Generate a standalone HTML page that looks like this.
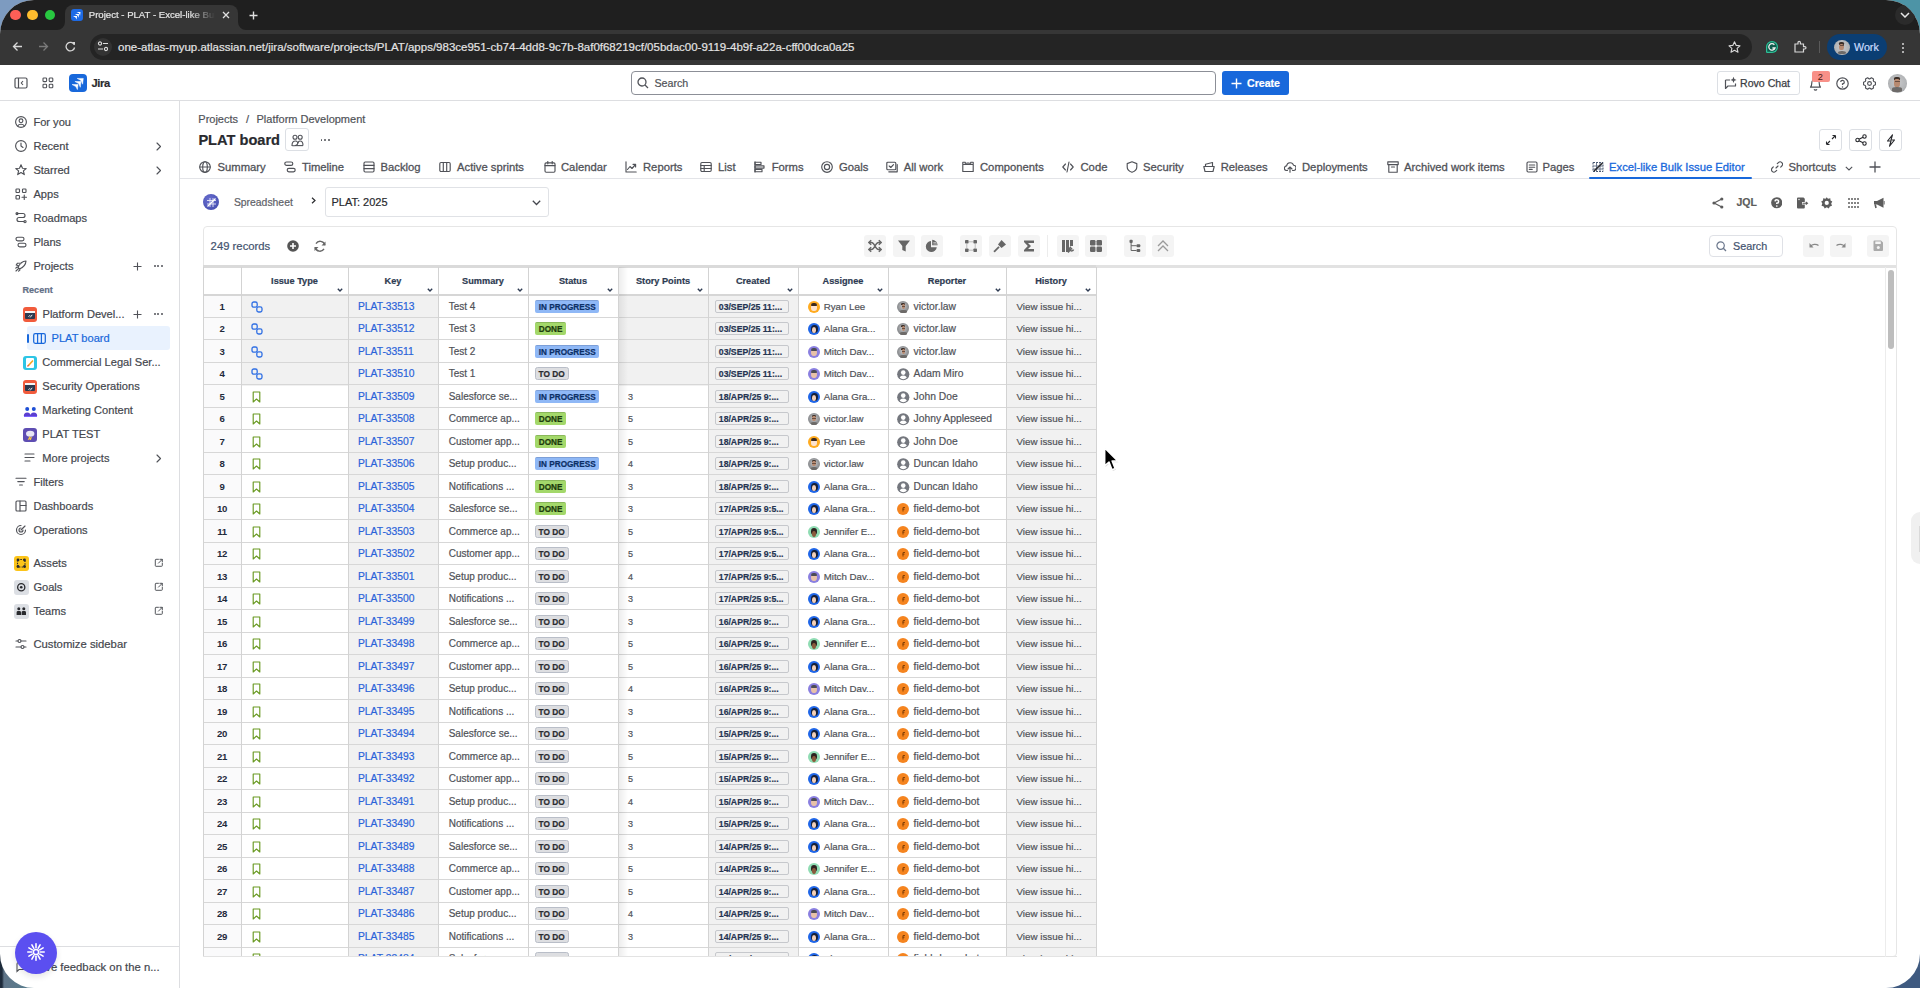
<!DOCTYPE html>
<html><head><meta charset="utf-8"><title>Project - PLAT - Excel-like Bulk Issue Editor</title><style>
*{box-sizing:border-box;margin:0;padding:0}
html,body{width:1920px;height:988px;overflow:hidden;font-family:"Liberation Sans", sans-serif}
body{background:linear-gradient(135deg,#7f9cc4 0%,#4f8aa0 45%,#3d5d86 100%);position:relative}
.win{position:absolute;left:0;top:0;width:1920px;height:988px;border-radius:34px;overflow:hidden;background:#fff}
.t{position:absolute;white-space:nowrap;-webkit-text-stroke-width:0.2px}
.r{position:absolute}
</style></head><body>
<div class="r" style="left:0.00px;top:0.00px;width:60.00px;height:60.00px;background:#7d9bc0"></div>
<div class="r" style="left:1860.00px;top:0.00px;width:60.00px;height:60.00px;background:#4d94a6"></div>
<div class="r" style="left:0.00px;top:928.00px;width:60.00px;height:60.00px;background:linear-gradient(90deg,#1d2a3a 0,#1d2a3a 2px,#5f7488 4px,#557f8e 60%,#3f7f8a)"></div>
<div class="r" style="left:1860.00px;top:928.00px;width:60.00px;height:60.00px;background:#3f5a80"></div>
<div class="win">
<div class="r" style="left:0.00px;top:0.00px;width:1920.00px;height:30.00px;background:#1f1f1f"></div>
<div class="r" style="left:0.00px;top:30.00px;width:1920.00px;height:35.00px;background:#363636"></div>
<div class="r" style="left:10.30px;top:9.90px;width:10.60px;height:10.60px;background:#fe5f57;border-radius:50%"></div>
<div class="r" style="left:27.00px;top:9.90px;width:10.60px;height:10.60px;background:#febc2e;border-radius:50%"></div>
<div class="r" style="left:44.70px;top:9.90px;width:10.60px;height:10.60px;background:#28c840;border-radius:50%"></div>
<div class="r" style="left:65.00px;top:5.00px;width:173.00px;height:26.00px;background:#363636;border-radius:8px 8px 0 0"></div>
<svg class="r" style="left:57.00px;top:22.00px;" width="8" height="8" viewBox="0 0 8 8"><path d="M8 0 V8 H0 A8 8 0 0 0 8 0Z" fill="#363636"/></svg>
<svg class="r" style="left:238.00px;top:22.00px;" width="8" height="8" viewBox="0 0 8 8"><path d="M0 0 V8 H8 A8 8 0 0 1 0 0Z" fill="#363636"/></svg>
<div class="r" style="left:71.00px;top:9.00px;width:12.00px;height:12.00px;background:#1d6ae5;border-radius:3px"></div>
<svg class="r" style="left:71.00px;top:9.00px;" width="12" height="12" viewBox="0 0 12 12"><g transform="scale(0.6667)"><path d="M8.2 4.4 H14.3 L13.6 10.2 L12 6.5Z M5.9 7.5 H12 L11.3 13.3 L9.7 9.6Z M3 10.5 H9.1 L8.4 15.6 L6.8 12.6Z" fill="#fff"/></g></svg>
<div class="t" style="left:88.75px;top:10px;font-size:9.6px;line-height:9.6px;font-weight:400;color:#e6e6e6;width:126px;overflow:hidden;-webkit-mask-image:linear-gradient(90deg,#000 80%,transparent 100%)">Project - PLAT - Excel-like Bulk Issue Editor</div>
<svg class="r" style="left:222.00px;top:11.00px;" width="8" height="8" viewBox="0 0 8 8"><path d="M1 1 L7 7 M7 1 L1 7" stroke="#e0e0e0" stroke-width="1.3"/></svg>
<svg class="r" style="left:249.00px;top:11.00px;" width="9" height="9" viewBox="0 0 9 9"><path d="M4.5 0.5 V8.5 M0.5 4.5 H8.5" stroke="#e0e0e0" stroke-width="1.4"/></svg>
<div class="r" style="left:1895.00px;top:5.00px;width:20.00px;height:20.00px;background:#2b2b2b;border-radius:50%"></div>
<svg class="r" style="left:1900.00px;top:12.00px;" width="10" height="6" viewBox="0 0 10 6"><path d="M1 1 L5 5 L9 1" stroke="#e8e8e8" stroke-width="1.5" fill="none"/></svg>
<svg class="r" style="left:12.00px;top:41.00px;" width="11" height="11" viewBox="0 0 11 11"><path d="M10 5.5 H1.5 M5.5 1.5 L1.5 5.5 L5.5 9.5" stroke="#d8d8d8" stroke-width="1.3" fill="none"/></svg>
<svg class="r" style="left:38.00px;top:41.00px;" width="11" height="11" viewBox="0 0 11 11"><path d="M1 5.5 H9.5 M5.5 1.5 L9.5 5.5 L5.5 9.5" stroke="#7a7a7a" stroke-width="1.3" fill="none"/></svg>
<svg class="r" style="left:65.00px;top:41.00px;" width="11" height="11" viewBox="0 0 11 11"><path d="M9.3 3.8 A4.3 4.3 0 1 0 9.6 6.5" stroke="#d8d8d8" stroke-width="1.3" fill="none"/><path d="M6.8 1 H10 V4.2Z" fill="#d8d8d8"/></svg>
<div class="r" style="left:90.00px;top:34.00px;width:1662.00px;height:25.50px;background:#242424;border-radius:13px"></div>
<div class="r" style="left:94.00px;top:37.50px;width:18.00px;height:18.00px;background:#333;border-radius:50%"></div>
<svg class="r" style="left:97.00px;top:41.00px;" width="12" height="11" viewBox="0 0 12 11"><circle cx="3" cy="2.5" r="1.6" stroke="#ddd" stroke-width="1.1" fill="none"/><path d="M6 2.5 H11" stroke="#ddd" stroke-width="1.2"/><circle cx="9" cy="8" r="1.6" stroke="#ddd" stroke-width="1.1" fill="none"/><path d="M1 8 H6" stroke="#ddd" stroke-width="1.2"/></svg>
<div class="t" style="left:118.00px;top:42px;font-size:11.5px;line-height:11.5px;font-weight:400;color:#e3e3e3;">one-atlas-myup.atlassian.net/jira/software/projects/PLAT/apps/983ce951-cb74-4dd8-9c7b-8af0f68219cf/05bdac00-9119-4b9f-a22a-cff00dca0a25</div>
<svg class="r" style="left:1728.00px;top:41.00px;" width="13" height="12" viewBox="0 0 13 12"><path d="M6.5 0.8 L8.2 4.4 L12 4.8 L9.1 7.3 L10 11.2 L6.5 9.2 L3 11.2 L3.9 7.3 L1 4.8 L4.8 4.4Z" stroke="#d8d8d8" stroke-width="1.1" fill="none" stroke-linejoin="round"/></svg>
<div class="r" style="left:1766.00px;top:41.00px;width:12.00px;height:12.00px;background:#0f5a4b;border-radius:50% 50% 50% 10%;box-shadow:inset 0 0 0 1.2px #2fbf97"></div>
<svg class="r" style="left:1766.00px;top:41.00px;" width="12" height="12" viewBox="0 0 12 12"><path d="M8.4 3.8 A3.2 3.2 0 1 0 9 7 H6.4" stroke="#f2f2f2" stroke-width="1.3" fill="none"/></svg>
<svg class="r" style="left:1793.00px;top:40.00px;" width="14" height="14" viewBox="0 0 14 14"><path d="M2 4 H5 V2.5 A1.2 1.2 0 0 1 7.4 2.5 V4 H10.5 V6.6 H11.8 A1.2 1.2 0 0 1 11.8 9 H10.5 V12 H2Z" stroke="#d8d8d8" stroke-width="1.2" fill="none"/></svg>
<div class="r" style="left:1819.00px;top:41.00px;width:1.00px;height:12.00px;background:#5a5a5a"></div>
<div class="r" style="left:1827.00px;top:34.00px;width:60.00px;height:26.00px;background:#0b3e73;border-radius:13px"></div>
<div class="r" style="left:1834.00px;top:39.50px;width:15.50px;height:15.50px;background:radial-gradient(circle at 50% 45%,#c9cacc 0,#b3b5b7 60%,#8e9194 100%);border-radius:50%;overflow:hidden"></div>
<div class="r" style="left:1839.12px;top:41.67px;width:5.27px;height:3.10px;background:#3b2e27;border-radius:40% 40% 10% 10%"></div>
<div class="r" style="left:1839.42px;top:43.69px;width:4.65px;height:6.51px;background:#b88a70;border-radius:40%"></div>
<div class="r" style="left:1839.58px;top:45.39px;width:4.34px;height:0.93px;background:rgba(40,30,25,0.55)"></div>
<div class="r" style="left:1837.72px;top:50.66px;width:8.06px;height:3.72px;background:#6d6a68;border-radius:45% 45% 30% 30%"></div>
<div class="t" style="left:1854.00px;top:42px;font-size:10.7px;line-height:10.7px;font-weight:400;color:#c9dcff;">Work</div>
<div class="r" style="left:1902.00px;top:42.80px;width:2.10px;height:2.10px;background:#d8d8d8;border-radius:50%"></div>
<div class="r" style="left:1902.00px;top:47.00px;width:2.10px;height:2.10px;background:#d8d8d8;border-radius:50%"></div>
<div class="r" style="left:1902.00px;top:51.20px;width:2.10px;height:2.10px;background:#d8d8d8;border-radius:50%"></div>
<div class="r" style="left:0.00px;top:65.00px;width:1920.00px;height:35.50px;background:#fff"></div>
<div class="r" style="left:0.00px;top:100.00px;width:1920.00px;height:1.00px;background:#dddee1"></div>
<svg class="r" style="left:14.00px;top:77.00px;" width="14" height="12" viewBox="0 0 14 12"><rect x="1" y="1" width="12" height="10" rx="1.5" stroke="#505258" stroke-width="1.2" fill="none"/><path d="M4.5 1 V11" stroke="#505258" stroke-width="1.2"/><path d="M9 4 L7.3 6 L9 8" stroke="#505258" stroke-width="1.1" fill="none"/></svg>
<svg class="r" style="left:42.00px;top:77.00px;" width="12" height="12" viewBox="0 0 12 12"><rect x="1" y="1" width="3.6" height="3.6" rx="0.8" stroke="#505258" stroke-width="1.1" fill="none"/><rect x="1" y="7.2" width="3.6" height="3.6" rx="0.8" stroke="#505258" stroke-width="1.1" fill="none"/><rect x="7.2" y="1" width="3.6" height="3.6" rx="0.8" stroke="#505258" stroke-width="1.1" fill="none"/><rect x="7.2" y="7.2" width="3.6" height="3.6" rx="0.8" stroke="#505258" stroke-width="1.1" fill="none"/></svg>
<div class="r" style="left:69.00px;top:74.00px;width:18.00px;height:18.00px;background:#1868db;border-radius:4px"></div>
<svg class="r" style="left:69.00px;top:74.00px;" width="18" height="18" viewBox="0 0 18 18"><path d="M8.2 4.4 H14.3 L13.600000000000001 10.2 L12.0 6.5 Z M5.9 7.5 H12.0 L11.3 13.3 L9.7 9.6 Z M3.0 10.5 H9.1 L8.4 15.6 L6.8 12.6 Z" fill="#fff" stroke="#fff" stroke-width="0.5" stroke-linejoin="round"/></svg>
<div class="t" style="left:91.50px;top:78px;font-size:11.2px;line-height:11.2px;font-weight:700;color:#292a2e;letter-spacing:-0.4px">Jira</div>
<div class="r" style="left:631.00px;top:71.00px;width:584.50px;height:24.00px;border:1px solid #8c8f97;border-radius:4px;background:#fff"></div>
<svg class="r" style="left:637.00px;top:77.00px;" width="12" height="12" viewBox="0 0 12 12"><circle cx="5" cy="5" r="4" stroke="#505258" stroke-width="1.3" fill="none"/><path d="M8 8 L11 11" stroke="#505258" stroke-width="1.3"/></svg>
<div class="t" style="left:654.40px;top:78px;font-size:10.7px;line-height:10.7px;font-weight:400;color:#505258;">Search</div>
<div class="r" style="left:1222.00px;top:71.20px;width:67.00px;height:23.40px;background:#1868db;border-radius:3px"></div>
<svg class="r" style="left:1231.00px;top:77.50px;" width="11" height="11" viewBox="0 0 11 11"><path d="M5.5 0.5 V10.5 M0.5 5.5 H10.5" stroke="#fff" stroke-width="1.4"/></svg>
<div class="t" style="left:1247.00px;top:78px;font-size:10.6px;line-height:10.6px;font-weight:700;color:#fff;">Create</div>
<div class="r" style="left:1716.60px;top:71.40px;width:83.00px;height:23.20px;border:1px solid #dcdfe4;border-radius:3px"></div>
<svg class="r" style="left:1724.00px;top:76.00px;" width="14" height="14" viewBox="0 0 14 14"><path d="M1.5 4 H6 M1.5 4 V12.5 L4 10 H11.5 V7.5" stroke="#505258" stroke-width="1.2" fill="none" stroke-linejoin="round"/><path d="M9.5 0.8 L10.4 3 L12.6 3.9 L10.4 4.8 L9.5 7 L8.6 4.8 L6.4 3.9 L8.6 3Z" fill="#505258"/></svg>
<div class="t" style="left:1740.00px;top:78px;font-size:10.6px;line-height:10.6px;font-weight:400;color:#3b3d42;-webkit-text-stroke:0.25px #3b3d42">Rovo Chat</div>
<svg class="r" style="left:1809.00px;top:76.00px;" width="13" height="15" viewBox="0 0 13 15"><path d="M1.5 11.2 C2.6 10.2 2.8 9 2.8 6.8 A3.7 3.9 0 0 1 10.2 6.8 C10.2 9 10.4 10.2 11.5 11.2 Z" stroke="#505258" stroke-width="1.2" fill="none" stroke-linejoin="round"/><path d="M5.1 13.3 A1.5 1.3 0 0 0 7.9 13.3" stroke="#505258" stroke-width="1.2" fill="none"/></svg>
<div class="r" style="left:1812.30px;top:70.50px;width:17.70px;height:11.50px;background:#f89088;border-radius:2px"></div>
<div class="t" style="left:1817.80px;top:73px;font-size:9.2px;line-height:9.2px;font-weight:400;color:#4a1a14;-webkit-text-stroke-width:0">2</div>
<svg class="r" style="left:1835.50px;top:76.50px;" width="13" height="13" viewBox="0 0 13 13"><circle cx="6.5" cy="6.5" r="5.7" stroke="#505258" stroke-width="1.2" fill="none"/><path d="M4.7 5 A1.8 1.8 0 1 1 6.5 6.9 V8" stroke="#505258" stroke-width="1.2" fill="none"/><circle cx="6.5" cy="9.9" r="0.75" fill="#505258"/></svg>
<svg class="r" style="left:1862.50px;top:76.50px;" width="13" height="13" viewBox="0 0 13 13"><polygon points="10.79,4.58 12.48,5.29 12.48,7.71 10.79,8.42 10.31,9.26 10.54,11.07 8.44,12.28 6.99,11.17 6.01,11.17 4.56,12.28 2.46,11.07 2.69,9.26 2.21,8.42 0.52,7.71 0.52,5.29 2.21,4.58 2.69,3.74 2.46,1.93 4.56,0.72 6.01,1.83 6.99,1.83 8.44,0.72 10.54,1.93 10.31,3.74" stroke="#505258" stroke-width="1.15" fill="none" stroke-linejoin="round"/><circle cx="6.5" cy="6.5" r="1.9" stroke="#505258" stroke-width="1.15" fill="none"/></svg>
<div class="r" style="left:1888.00px;top:74.00px;width:18.50px;height:18.50px;background:radial-gradient(circle at 50% 45%,#c9cacc 0,#b3b5b7 60%,#8e9194 100%);border-radius:50%;overflow:hidden"></div>
<div class="r" style="left:1894.11px;top:76.59px;width:6.29px;height:3.70px;background:#3b2e27;border-radius:40% 40% 10% 10%"></div>
<div class="r" style="left:1894.47px;top:79.00px;width:5.55px;height:7.77px;background:#b88a70;border-radius:40%"></div>
<div class="r" style="left:1894.66px;top:81.03px;width:5.18px;height:1.11px;background:rgba(40,30,25,0.55)"></div>
<div class="r" style="left:1892.44px;top:87.32px;width:9.62px;height:4.44px;background:#6d6a68;border-radius:45% 45% 30% 30%"></div>
<div class="r" style="left:179.00px;top:101.00px;width:1.00px;height:887.00px;background:#dddee1"></div>
<svg class="r" style="left:15.00px;top:115.80px;" width="12" height="12" viewBox="0 0 12 12"><circle cx="6" cy="6" r="5.4" stroke="#505258" stroke-width="1.15" fill="none" stroke-linecap="round" stroke-linejoin="round"/><circle cx="6" cy="4.8" r="1.9" stroke="#505258" stroke-width="1.15" fill="none" stroke-linecap="round" stroke-linejoin="round"/><path d="M2.6 10 A3.8 3.2 0 0 1 9.4 10" stroke="#505258" stroke-width="1.15" fill="none" stroke-linecap="round" stroke-linejoin="round"/></svg>
<div class="t" style="left:33.40px;top:117px;font-size:11.1px;line-height:11.1px;font-weight:400;color:#44474e;">For you</div>
<svg class="r" style="left:15.00px;top:139.80px;" width="12" height="12" viewBox="0 0 12 12"><circle cx="6" cy="6" r="5.4" stroke="#505258" stroke-width="1.15" fill="none" stroke-linecap="round" stroke-linejoin="round"/><path d="M6 3 V6 L8 7.5" stroke="#505258" stroke-width="1.15" fill="none" stroke-linecap="round" stroke-linejoin="round"/></svg>
<div class="t" style="left:33.40px;top:141px;font-size:11.1px;line-height:11.1px;font-weight:400;color:#44474e;">Recent</div>
<svg class="r" style="left:15.00px;top:163.80px;" width="12" height="12" viewBox="0 0 12 12"><path d="M6 0.8 L7.5 4.2 L11.2 4.5 L8.4 6.9 L9.3 10.6 L6 8.6 L2.7 10.6 L3.6 6.9 L0.8 4.5 L4.5 4.2Z" stroke="#505258" stroke-width="1.15" fill="none" stroke-linecap="round" stroke-linejoin="round"/></svg>
<div class="t" style="left:33.40px;top:165px;font-size:11.1px;line-height:11.1px;font-weight:400;color:#44474e;">Starred</div>
<svg class="r" style="left:15.00px;top:187.80px;" width="12" height="12" viewBox="0 0 12 12"><rect x="1" y="1" width="3.5" height="3.5" rx="0.7" stroke="#505258" stroke-width="1.15" fill="none" stroke-linecap="round" stroke-linejoin="round"/><rect x="7.5" y="1" width="3.5" height="3.5" rx="0.7" stroke="#505258" stroke-width="1.15" fill="none" stroke-linecap="round" stroke-linejoin="round"/><rect x="1" y="7.5" width="3.5" height="3.5" rx="0.7" stroke="#505258" stroke-width="1.15" fill="none" stroke-linecap="round" stroke-linejoin="round"/><path d="M9.25 7 V11.5 M7 9.25 H11.5" stroke="#505258" stroke-width="1.15" fill="none" stroke-linecap="round" stroke-linejoin="round"/></svg>
<div class="t" style="left:33.40px;top:189px;font-size:11.1px;line-height:11.1px;font-weight:400;color:#44474e;">Apps</div>
<svg class="r" style="left:15.00px;top:211.80px;" width="12" height="12" viewBox="0 0 12 12"><path d="M2 1.5 H8 A2 2 0 0 1 8 5.5 H4 A2 2 0 0 0 4 9.5 H9" stroke="#505258" stroke-width="1.15" fill="none" stroke-linecap="round" stroke-linejoin="round"/><circle cx="2" cy="1.6" r="1" stroke="#505258" stroke-width="1.15" fill="none" stroke-linecap="round" stroke-linejoin="round"/><circle cx="10" cy="9.6" r="1.1" stroke="#505258" stroke-width="1.15" fill="none" stroke-linecap="round" stroke-linejoin="round"/></svg>
<div class="t" style="left:33.40px;top:213px;font-size:11.1px;line-height:11.1px;font-weight:400;color:#44474e;">Roadmaps</div>
<svg class="r" style="left:15.00px;top:235.80px;" width="12" height="12" viewBox="0 0 12 12"><rect x="1" y="1.2" width="8" height="3.6" rx="1.8" stroke="#505258" stroke-width="1.15" fill="none" stroke-linecap="round" stroke-linejoin="round"/><rect x="3" y="7.2" width="8" height="3.6" rx="1.8" stroke="#505258" stroke-width="1.15" fill="none" stroke-linecap="round" stroke-linejoin="round"/></svg>
<div class="t" style="left:33.40px;top:237px;font-size:11.1px;line-height:11.1px;font-weight:400;color:#44474e;">Plans</div>
<svg class="r" style="left:15.00px;top:259.80px;" width="12" height="12" viewBox="0 0 12 12"><path d="M3.2 8.8 L1 11 M5 9.8 L3.6 11.2 M2.2 6.8 L0.8 8.2 M3 7.5 C4.5 4 7 1.2 11 1 C10.8 5 8 7.5 4.5 9 Z M6.5 3 L2.5 3.2 L1.2 5 L3.6 5.8" stroke="#505258" stroke-width="1.15" fill="none" stroke-linecap="round" stroke-linejoin="round"/></svg>
<div class="t" style="left:33.40px;top:261px;font-size:11.1px;line-height:11.1px;font-weight:400;color:#44474e;">Projects</div>
<svg class="r" style="left:154.50px;top:141.50px;" width="7" height="9" viewBox="0 0 7 9"><path d="M2 1 L5.5 4.5 L2 8" stroke="#505258" stroke-width="1.15" fill="none" stroke-linecap="round" stroke-linejoin="round"/></svg>
<svg class="r" style="left:154.50px;top:165.50px;" width="7" height="9" viewBox="0 0 7 9"><path d="M2 1 L5.5 4.5 L2 8" stroke="#505258" stroke-width="1.15" fill="none" stroke-linecap="round" stroke-linejoin="round"/></svg>
<svg class="r" style="left:132.50px;top:261.50px;" width="9" height="9" viewBox="0 0 9 9"><path d="M4.5 0.5 V8.5 M0.5 4.5 H8.5" stroke="#505258" stroke-width="1.1"/></svg>
<div class="r" style="left:153.50px;top:265.00px;width:2.00px;height:2.00px;background:#505258;border-radius:50%"></div>
<div class="r" style="left:157.30px;top:265.00px;width:2.00px;height:2.00px;background:#505258;border-radius:50%"></div>
<div class="r" style="left:161.10px;top:265.00px;width:2.00px;height:2.00px;background:#505258;border-radius:50%"></div>
<div class="t" style="left:22.50px;top:286px;font-size:9.1px;line-height:9.1px;font-weight:700;color:#626f86;">Recent</div>
<div class="r" style="left:22.50px;top:307.00px;width:14.50px;height:14.50px;background:#f15b3c;border-radius:3px"></div>
<div class="r" style="left:24.50px;top:310.50px;width:10.50px;height:8.00px;background:#2d3a4f;border-radius:1px"></div>
<div class="r" style="left:24.50px;top:310.50px;width:10.50px;height:2.20px;background:#f5f5f5"></div>
<svg class="r" style="left:27.50px;top:314.00px;" width="5" height="4" viewBox="0 0 5 4"><path d="M0.5 2.8 L2 1.2 M2.2 3.4 L4.2 0.8" stroke="#fff" stroke-width="0.9"/></svg>
<div class="t" style="left:42.50px;top:309px;font-size:11.1px;line-height:11.1px;font-weight:400;color:#44474e;">Platform Devel...</div>
<svg class="r" style="left:132.50px;top:309.50px;" width="9" height="9" viewBox="0 0 9 9"><path d="M4.5 0.5 V8.5 M0.5 4.5 H8.5" stroke="#505258" stroke-width="1.1"/></svg>
<div class="r" style="left:153.50px;top:313.00px;width:2.00px;height:2.00px;background:#505258;border-radius:50%"></div>
<div class="r" style="left:157.30px;top:313.00px;width:2.00px;height:2.00px;background:#505258;border-radius:50%"></div>
<div class="r" style="left:161.10px;top:313.00px;width:2.00px;height:2.00px;background:#505258;border-radius:50%"></div>
<div class="r" style="left:27.00px;top:326.30px;width:143.00px;height:23.40px;background:#e9f2fe;border-radius:3px"></div>
<div class="r" style="left:27.20px;top:334.00px;width:1.60px;height:8.50px;background:#1868db;border-radius:1px"></div>
<svg class="r" style="left:32.50px;top:332.50px;" width="13" height="11" viewBox="0 0 13 11"><rect x="0.7" y="0.7" width="11.6" height="9.6" rx="1.5" stroke="#1868db" stroke-width="1.25" fill="none"/><path d="M4.6 0.7 V10.3 M8.4 0.7 V10.3" stroke="#1868db" stroke-width="1.25"/></svg>
<div class="t" style="left:51.50px;top:333px;font-size:11.1px;line-height:11.1px;font-weight:400;color:#1868db;">PLAT board</div>
<div class="r" style="left:22.50px;top:355.50px;width:14.50px;height:14.50px;background:#2ec5e5;border-radius:3px"></div>
<div class="r" style="left:25.50px;top:358.00px;width:8.50px;height:9.50px;background:#fff;border-radius:1px"></div>
<svg class="r" style="left:26.50px;top:358.50px;" width="7" height="8" viewBox="0 0 7 8"><path d="M1 7 L6 1.5" stroke="#f5a623" stroke-width="1.6"/><path d="M0.5 7.5 L1.5 6" stroke="#d9534f" stroke-width="1.2"/></svg>
<div class="t" style="left:42.30px;top:357px;font-size:11.1px;line-height:11.1px;font-weight:400;color:#44474e;">Commercial Legal Ser...</div>
<div class="r" style="left:22.50px;top:379.50px;width:14.50px;height:14.50px;background:#f15b3c;border-radius:3px"></div>
<div class="r" style="left:24.50px;top:383.00px;width:10.50px;height:8.00px;background:#2d3a4f;border-radius:1px"></div>
<div class="r" style="left:24.50px;top:383.00px;width:10.50px;height:2.20px;background:#f5f5f5"></div>
<svg class="r" style="left:27.50px;top:386.50px;" width="5" height="4" viewBox="0 0 5 4"><path d="M0.5 2.8 L2 1.2 M2.2 3.4 L4.2 0.8" stroke="#fff" stroke-width="0.9"/></svg>
<div class="t" style="left:42.30px;top:381px;font-size:11.1px;line-height:11.1px;font-weight:400;color:#44474e;">Security Operations</div>
<svg class="r" style="left:22.50px;top:403.50px;" width="15" height="15" viewBox="0 0 15 15"><circle cx="4.2" cy="5" r="2" fill="#1d4fd6"/><circle cx="10.8" cy="5" r="2" fill="#1d4fd6"/><path d="M0.8 12 A3.4 3.6 0 0 1 7.6 12Z M7.4 12 A3.4 3.6 0 0 1 14.2 12Z" fill="#5b3fd1"/><path d="M1 12.5 H14" stroke="#7b61ff" stroke-width="1"/></svg>
<div class="t" style="left:42.30px;top:405px;font-size:11.1px;line-height:11.1px;font-weight:400;color:#44474e;">Marketing Content</div>
<div class="r" style="left:22.50px;top:427.50px;width:14.50px;height:14.50px;background:#5e4db2;border-radius:3px"></div>
<svg class="r" style="left:24.50px;top:430.00px;" width="10.5" height="9.5" viewBox="0 0 10.5 9.5"><ellipse cx="5.2" cy="3.8" rx="4.2" ry="3" fill="#e8e6f5"/><path d="M5 6.5 L3.8 9 L6 8 L5.2 10" stroke="#f5c542" stroke-width="1.2" fill="none"/></svg>
<div class="t" style="left:42.30px;top:429px;font-size:11.1px;line-height:11.1px;font-weight:400;color:#44474e;">PLAT TEST</div>
<svg class="r" style="left:24.00px;top:452.00px;" width="12" height="12" viewBox="0 0 12 12"><path d="M1 2 H10 M1 5.5 H10 M1 9 H6" stroke="#505258" stroke-width="1.15" fill="none" stroke-linecap="round" stroke-linejoin="round"/></svg>
<div class="t" style="left:42.30px;top:453px;font-size:11.1px;line-height:11.1px;font-weight:400;color:#44474e;">More projects</div>
<svg class="r" style="left:154.50px;top:453.50px;" width="7" height="9" viewBox="0 0 7 9"><path d="M2 1 L5.5 4.5 L2 8" stroke="#505258" stroke-width="1.15" fill="none" stroke-linecap="round" stroke-linejoin="round"/></svg>
<svg class="r" style="left:15.00px;top:476.00px;" width="12" height="12" viewBox="0 0 12 12"><path d="M1 2.2 H11 M2.8 5.6 H9.2 M4.6 9 H7.4" stroke="#505258" stroke-width="1.15" fill="none" stroke-linecap="round" stroke-linejoin="round"/></svg>
<div class="t" style="left:33.40px;top:477px;font-size:11.1px;line-height:11.1px;font-weight:400;color:#44474e;">Filters</div>
<svg class="r" style="left:15.00px;top:500.00px;" width="12" height="12" viewBox="0 0 12 12"><rect x="1" y="1" width="10" height="10" rx="1" stroke="#505258" stroke-width="1.15" fill="none" stroke-linecap="round" stroke-linejoin="round"/><path d="M5 1 V11 M5 5.5 H11" stroke="#505258" stroke-width="1.15" fill="none" stroke-linecap="round" stroke-linejoin="round"/></svg>
<div class="t" style="left:33.40px;top:501px;font-size:11.1px;line-height:11.1px;font-weight:400;color:#44474e;">Dashboards</div>
<svg class="r" style="left:15.00px;top:524.00px;" width="12" height="12" viewBox="0 0 12 12"><path d="M10.5 6 A4.5 4.5 0 1 1 6 1.5" stroke="#505258" stroke-width="1.15" fill="none" stroke-linecap="round" stroke-linejoin="round"/><path d="M8 6 A2 2 0 1 1 6 4" stroke="#505258" stroke-width="1.15" fill="none" stroke-linecap="round" stroke-linejoin="round"/><path d="M6 6 L10 2" stroke="#505258" stroke-width="1.15" fill="none" stroke-linecap="round" stroke-linejoin="round"/></svg>
<div class="t" style="left:33.40px;top:525px;font-size:11.1px;line-height:11.1px;font-weight:400;color:#44474e;">Operations</div>
<div class="r" style="left:14.00px;top:556.00px;width:14.50px;height:14.50px;background:#fcc419;border-radius:3px"></div>
<svg class="r" style="left:14.00px;top:556.00px;" width="14.5" height="14.5" viewBox="0 0 14.5 14.5"><rect x="3.5" y="3.5" width="7.5" height="7.5" stroke="#292a2e" stroke-width="1.1" fill="none" stroke-dasharray="1.6 1.2"/><circle cx="4" cy="4" r="1.4" fill="#292a2e"/><circle cx="10.5" cy="4" r="1.4" fill="#292a2e"/><circle cx="4" cy="10.5" r="1.4" fill="#292a2e"/><circle cx="10.5" cy="10.5" r="1.4" fill="#292a2e"/></svg>
<div class="t" style="left:33.40px;top:558px;font-size:11.1px;line-height:11.1px;font-weight:400;color:#44474e;">Assets</div>
<svg class="r" style="left:152.60px;top:557.40px;" width="12" height="12" viewBox="0 0 12 12"><g transform="translate(1.6,1.6) scale(0.7)"><path d="M5.5 1 H2 A1 1 0 0 0 1 2 V10 A1 1 0 0 0 2 11 H10 A1 1 0 0 0 11 10 V6.5 M5.5 6.5 L11 1 M7.5 1 H11 V4.5" stroke="#505258" stroke-width="1.4" fill="none" stroke-linecap="round" stroke-linejoin="round"/></g></svg>
<div class="r" style="left:14.00px;top:580.00px;width:14.50px;height:14.50px;background:#dcdfe4;border-radius:3px"></div>
<svg class="r" style="left:14.00px;top:580.00px;" width="14.5" height="14.5" viewBox="0 0 14.5 14.5"><circle cx="7.25" cy="7.25" r="3.6" stroke="#292a2e" stroke-width="1.3" fill="none"/><circle cx="7.25" cy="7.25" r="1.3" fill="#292a2e"/></svg>
<div class="t" style="left:33.40px;top:582px;font-size:11.1px;line-height:11.1px;font-weight:400;color:#44474e;">Goals</div>
<svg class="r" style="left:152.60px;top:581.40px;" width="12" height="12" viewBox="0 0 12 12"><g transform="translate(1.6,1.6) scale(0.7)"><path d="M5.5 1 H2 A1 1 0 0 0 1 2 V10 A1 1 0 0 0 2 11 H10 A1 1 0 0 0 11 10 V6.5 M5.5 6.5 L11 1 M7.5 1 H11 V4.5" stroke="#505258" stroke-width="1.4" fill="none" stroke-linecap="round" stroke-linejoin="round"/></g></svg>
<div class="r" style="left:14.00px;top:604.00px;width:14.50px;height:14.50px;background:#dcdfe4;border-radius:3px"></div>
<svg class="r" style="left:14.00px;top:604.00px;" width="14.5" height="14.5" viewBox="0 0 14.5 14.5"><circle cx="4.8" cy="4.8" r="1.5" fill="#292a2e"/><circle cx="9.8" cy="4.8" r="1.5" fill="#292a2e"/><path d="M2.6 11 V8.5 A1.4 1.4 0 0 1 4 7.1 H5.6 A1.4 1.4 0 0 1 7 8.5 V11Z M7.6 11 V8.5 A1.4 1.4 0 0 1 9 7.1 H10.6 A1.4 1.4 0 0 1 12 8.5 V11Z" fill="#292a2e"/></svg>
<div class="t" style="left:33.40px;top:606px;font-size:11.1px;line-height:11.1px;font-weight:400;color:#44474e;">Teams</div>
<svg class="r" style="left:152.60px;top:605.40px;" width="12" height="12" viewBox="0 0 12 12"><g transform="translate(1.6,1.6) scale(0.7)"><path d="M5.5 1 H2 A1 1 0 0 0 1 2 V10 A1 1 0 0 0 2 11 H10 A1 1 0 0 0 11 10 V6.5 M5.5 6.5 L11 1 M7.5 1 H11 V4.5" stroke="#505258" stroke-width="1.4" fill="none" stroke-linecap="round" stroke-linejoin="round"/></g></svg>
<svg class="r" style="left:15.00px;top:637.50px;" width="12" height="12" viewBox="0 0 12 12"><path d="M1 3 H3 M6 3 H11 M1 9 H6 M9 9 H11" stroke="#505258" stroke-width="1.15" fill="none" stroke-linecap="round" stroke-linejoin="round"/><circle cx="4.5" cy="3" r="1.5" stroke="#505258" stroke-width="1.15" fill="none" stroke-linecap="round" stroke-linejoin="round"/><circle cx="7.5" cy="9" r="1.5" stroke="#505258" stroke-width="1.15" fill="none" stroke-linecap="round" stroke-linejoin="round"/></svg>
<div class="t" style="left:33.40px;top:639px;font-size:11.3px;line-height:11.3px;font-weight:400;color:#44474e;">Customize sidebar</div>
<div class="r" style="left:0.00px;top:946.00px;width:179.00px;height:1.00px;background:#dddee1"></div>
<svg class="r" style="left:15.00px;top:961.00px;" width="12" height="12" viewBox="0 0 12 12"><path d="M2 10.5 V3 A1.5 1.5 0 0 1 3.5 1.5 H9.5 A1.5 1.5 0 0 1 11 3 V7 A1.5 1.5 0 0 1 9.5 8.5 H4Z" stroke="#505258" stroke-width="1.1" fill="none"/></svg>
<div class="t" style="left:34.00px;top:962px;font-size:11.3px;line-height:11.3px;font-weight:400;color:#44474e;">Give feedback on the n...</div>
<div class="t" style="left:198.30px;top:114px;font-size:11px;line-height:11px;font-weight:400;color:#505258;">Projects</div>
<div class="t" style="left:246.00px;top:114px;font-size:11px;line-height:11px;font-weight:400;color:#505258;">/</div>
<div class="t" style="left:256.50px;top:114px;font-size:11px;line-height:11px;font-weight:400;color:#505258;">Platform Development</div>
<div class="t" style="left:198.40px;top:133px;font-size:14.6px;line-height:14.6px;font-weight:700;color:#292a2e;">PLAT board</div>
<div class="r" style="left:285.40px;top:128.40px;width:23.20px;height:23.00px;border:1px solid #dcdfe4;border-radius:3px"></div>
<svg class="r" style="left:290.50px;top:133.50px;" width="13" height="13" viewBox="0 0 13 13"><circle cx="4" cy="3.3" r="2" stroke="#505258" stroke-width="1.1" fill="none"/><circle cx="9.2" cy="3.3" r="2" stroke="#505258" stroke-width="1.1" fill="none"/><path d="M1 11.5 C1 8.5 2.5 7 4.5 7 C6.5 7 7 9 6.5 10 C6 11.5 3 12 1 11.5Z M12 11.5 C12 8.5 10.7 7 9 7 C7.5 7 7 8.5 7.3 9.5" stroke="#505258" stroke-width="1.1" fill="none"/><path d="M4 11.6 H12" stroke="#505258" stroke-width="1.1"/></svg>
<div class="r" style="left:320.50px;top:139.30px;width:1.90px;height:1.90px;background:#505258;border-radius:50%"></div>
<div class="r" style="left:324.20px;top:139.30px;width:1.90px;height:1.90px;background:#505258;border-radius:50%"></div>
<div class="r" style="left:327.90px;top:139.30px;width:1.90px;height:1.90px;background:#505258;border-radius:50%"></div>
<div class="r" style="left:1818.50px;top:128.50px;width:23.30px;height:22.80px;border:1px solid #dcdfe4;border-radius:3px"></div>
<div class="r" style="left:1848.50px;top:128.50px;width:23.30px;height:22.80px;border:1px solid #dcdfe4;border-radius:3px"></div>
<div class="r" style="left:1878.60px;top:128.50px;width:23.30px;height:22.80px;border:1px solid #dcdfe4;border-radius:3px"></div>
<svg class="r" style="left:1824.50px;top:134.00px;" width="12" height="12" viewBox="0 0 12 12"><path d="M1.5 10.5 L5 7 M1.5 10.5 V7.5 M1.5 10.5 H4.5 M10.5 1.5 L7 5 M10.5 1.5 V4.5 M10.5 1.5 H7.5" stroke="#292a2e" stroke-width="1.1" fill="none"/></svg>
<svg class="r" style="left:1854.50px;top:134.00px;" width="12" height="12" viewBox="0 0 12 12"><circle cx="9.5" cy="2.5" r="1.7" stroke="#292a2e" stroke-width="1.1" fill="none"/><circle cx="2.5" cy="6" r="1.7" stroke="#292a2e" stroke-width="1.1" fill="none"/><circle cx="9.5" cy="9.5" r="1.7" stroke="#292a2e" stroke-width="1.1" fill="none"/><path d="M4 5.2 L8 3.3 M4 6.8 L8 8.7" stroke="#292a2e" stroke-width="1.1"/></svg>
<svg class="r" style="left:1884.50px;top:133.50px;" width="12" height="13" viewBox="0 0 12 13"><path d="M7.5 0.8 L2.5 7 H6 L4.5 12.2 L9.5 6 H6Z" stroke="#292a2e" stroke-width="1.1" fill="none" stroke-linejoin="round"/></svg>
<svg class="r" style="left:199.30px;top:161.00px;" width="12" height="12" viewBox="0 0 12 12"><circle cx="6" cy="6" r="5.3" stroke="#505258" stroke-width="1.15" fill="none" stroke-linecap="round" stroke-linejoin="round"/><ellipse cx="6" cy="6" rx="2.3" ry="5.3" stroke="#505258" stroke-width="1.15" fill="none" stroke-linecap="round" stroke-linejoin="round"/><path d="M0.8 6 H11.2" stroke="#505258" stroke-width="1.15" fill="none" stroke-linecap="round" stroke-linejoin="round"/></svg>
<div class="t" style="left:217.50px;top:162px;font-size:11.25px;line-height:11.25px;font-weight:400;color:#505258;-webkit-text-stroke-width:0.3px">Summary</div>
<svg class="r" style="left:283.70px;top:161.00px;" width="12" height="12" viewBox="0 0 12 12"><rect x="0.8" y="1" width="8" height="3.4" rx="1.7" stroke="#505258" stroke-width="1.15" fill="none" stroke-linecap="round" stroke-linejoin="round"/><rect x="3.2" y="7.4" width="8" height="3.4" rx="1.7" stroke="#505258" stroke-width="1.15" fill="none" stroke-linecap="round" stroke-linejoin="round"/></svg>
<div class="t" style="left:302.00px;top:162px;font-size:11.25px;line-height:11.25px;font-weight:400;color:#505258;-webkit-text-stroke-width:0.3px">Timeline</div>
<svg class="r" style="left:362.70px;top:161.00px;" width="12" height="12" viewBox="0 0 12 12"><rect x="1" y="1" width="10" height="10" rx="1.2" stroke="#505258" stroke-width="1.15" fill="none" stroke-linecap="round" stroke-linejoin="round"/><path d="M1 4.3 H11 M1 7.6 H11" stroke="#505258" stroke-width="1.15" fill="none" stroke-linecap="round" stroke-linejoin="round"/></svg>
<div class="t" style="left:380.50px;top:162px;font-size:11.25px;line-height:11.25px;font-weight:400;color:#505258;-webkit-text-stroke-width:0.3px">Backlog</div>
<svg class="r" style="left:438.70px;top:161.00px;" width="12" height="12" viewBox="0 0 12 12"><rect x="0.8" y="1.5" width="10.4" height="9" rx="1.2" stroke="#505258" stroke-width="1.15" fill="none" stroke-linecap="round" stroke-linejoin="round"/><path d="M4.3 1.5 V10.5 M7.7 1.5 V10.5" stroke="#505258" stroke-width="1.15" fill="none" stroke-linecap="round" stroke-linejoin="round"/></svg>
<div class="t" style="left:457.00px;top:162px;font-size:11.25px;line-height:11.25px;font-weight:400;color:#505258;-webkit-text-stroke-width:0.3px">Active sprints</div>
<svg class="r" style="left:543.70px;top:161.00px;" width="12" height="12" viewBox="0 0 12 12"><rect x="1" y="1.8" width="10" height="9.4" rx="1.2" stroke="#505258" stroke-width="1.15" fill="none" stroke-linecap="round" stroke-linejoin="round"/><path d="M1 4.6 H11 M3.8 0.5 V2.8 M8.2 0.5 V2.8" stroke="#505258" stroke-width="1.15" fill="none" stroke-linecap="round" stroke-linejoin="round"/></svg>
<div class="t" style="left:561.00px;top:162px;font-size:11.25px;line-height:11.25px;font-weight:400;color:#505258;-webkit-text-stroke-width:0.3px">Calendar</div>
<svg class="r" style="left:625.00px;top:161.00px;" width="12" height="12" viewBox="0 0 12 12"><path d="M1 0.8 V11 H11.2 M2.5 8.5 L5 5.5 L7 7.5 L10.5 3.5 M8 3.3 H10.6 V6" stroke="#505258" stroke-width="1.15" fill="none" stroke-linecap="round" stroke-linejoin="round"/></svg>
<div class="t" style="left:643.00px;top:162px;font-size:11.25px;line-height:11.25px;font-weight:400;color:#505258;-webkit-text-stroke-width:0.3px">Reports</div>
<svg class="r" style="left:700.00px;top:161.00px;" width="12" height="12" viewBox="0 0 12 12"><rect x="0.8" y="1.5" width="10.4" height="9" rx="1.2" stroke="#505258" stroke-width="1.15" fill="none" stroke-linecap="round" stroke-linejoin="round"/><path d="M0.8 4.5 H11.2 M0.8 7.5 H11.2 M4.2 4.5 V10.5" stroke="#505258" stroke-width="1.15" fill="none" stroke-linecap="round" stroke-linejoin="round"/></svg>
<div class="t" style="left:718.00px;top:162px;font-size:11.25px;line-height:11.25px;font-weight:400;color:#505258;-webkit-text-stroke-width:0.3px">List</div>
<svg class="r" style="left:753.50px;top:161.00px;" width="12" height="12" viewBox="0 0 12 12"><path d="M1 0.8 V11" stroke="#505258" stroke-width="1.15" fill="none" stroke-linecap="round" stroke-linejoin="round"/><rect x="1" y="1.2" width="6" height="2.3" stroke="#505258" stroke-width="1.15" fill="none" stroke-linecap="round" stroke-linejoin="round"/><rect x="1" y="4.8" width="9" height="2.3" stroke="#505258" stroke-width="1.15" fill="none" stroke-linecap="round" stroke-linejoin="round"/><rect x="1" y="8.4" width="7" height="2.3" stroke="#505258" stroke-width="1.15" fill="none" stroke-linecap="round" stroke-linejoin="round"/></svg>
<div class="t" style="left:771.70px;top:162px;font-size:11.25px;line-height:11.25px;font-weight:400;color:#505258;-webkit-text-stroke-width:0.3px">Forms</div>
<svg class="r" style="left:820.50px;top:161.00px;" width="12" height="12" viewBox="0 0 12 12"><circle cx="6" cy="6" r="5.3" stroke="#505258" stroke-width="1.15" fill="none" stroke-linecap="round" stroke-linejoin="round"/><circle cx="6" cy="6" r="2.6" stroke="#505258" stroke-width="1.15" fill="none" stroke-linecap="round" stroke-linejoin="round"/></svg>
<div class="t" style="left:839.00px;top:162px;font-size:11.25px;line-height:11.25px;font-weight:400;color:#505258;-webkit-text-stroke-width:0.3px">Goals</div>
<svg class="r" style="left:885.70px;top:161.00px;" width="12" height="12" viewBox="0 0 12 12"><rect x="0.8" y="1.2" width="9" height="7.5" rx="1" stroke="#505258" stroke-width="1.15" fill="none" stroke-linecap="round" stroke-linejoin="round"/><path d="M2.8 10.8 H11.2 V3.5 M3.2 5 L4.8 6.5 L7.5 3.6" stroke="#505258" stroke-width="1.15" fill="none" stroke-linecap="round" stroke-linejoin="round"/></svg>
<div class="t" style="left:903.70px;top:162px;font-size:11.25px;line-height:11.25px;font-weight:400;color:#505258;-webkit-text-stroke-width:0.3px">All work</div>
<svg class="r" style="left:962.00px;top:161.00px;" width="12" height="12" viewBox="0 0 12 12"><path d="M0.8 3.5 V10.5 H11.2 V3.5 Z M0.8 3.5 V1.2 H3.3 V3.5 M8.7 3.5 V1.2 H11.2 V3.5 M4.8 3.5 V2 H7.2 V3.5" stroke="#505258" stroke-width="1.15" fill="none" stroke-linecap="round" stroke-linejoin="round"/></svg>
<div class="t" style="left:980.00px;top:162px;font-size:11.25px;line-height:11.25px;font-weight:400;color:#505258;-webkit-text-stroke-width:0.3px">Components</div>
<svg class="r" style="left:1062.00px;top:161.00px;" width="12" height="12" viewBox="0 0 12 12"><path d="M3.5 3 L0.8 6 L3.5 9 M8.5 3 L11.2 6 L8.5 9 M7 1 L5 11" stroke="#505258" stroke-width="1.15" fill="none" stroke-linecap="round" stroke-linejoin="round"/></svg>
<div class="t" style="left:1080.50px;top:162px;font-size:11.25px;line-height:11.25px;font-weight:400;color:#505258;-webkit-text-stroke-width:0.3px">Code</div>
<svg class="r" style="left:1125.70px;top:161.00px;" width="12" height="12" viewBox="0 0 12 12"><path d="M6 0.8 L10.8 2.6 V6 C10.8 8.6 8.8 10.4 6 11.3 C3.2 10.4 1.2 8.6 1.2 6 V2.6 Z" stroke="#505258" stroke-width="1.15" fill="none" stroke-linecap="round" stroke-linejoin="round"/></svg>
<div class="t" style="left:1143.00px;top:162px;font-size:11.25px;line-height:11.25px;font-weight:400;color:#505258;-webkit-text-stroke-width:0.3px">Security</div>
<svg class="r" style="left:1203.00px;top:161.00px;" width="12" height="12" viewBox="0 0 12 12"><path d="M0.8 5.5 H11.2 L10 10.5 H2 Z M2.5 5.5 V3.2 L9.5 1.5 V5.5" stroke="#505258" stroke-width="1.15" fill="none" stroke-linecap="round" stroke-linejoin="round"/></svg>
<div class="t" style="left:1220.70px;top:162px;font-size:11.25px;line-height:11.25px;font-weight:400;color:#505258;-webkit-text-stroke-width:0.3px">Releases</div>
<svg class="r" style="left:1284.00px;top:161.00px;" width="12" height="12" viewBox="0 0 12 12"><path d="M3.5 9.5 H2.8 A2.3 2.3 0 0 1 2.6 4.9 A3.6 3.6 0 0 1 9.6 4.3 A2.6 2.6 0 0 1 9.2 9.5 H8.5 M6 11.2 V6 M4 8 L6 6 L8 8" stroke="#505258" stroke-width="1.15" fill="none" stroke-linecap="round" stroke-linejoin="round"/></svg>
<div class="t" style="left:1302.00px;top:162px;font-size:11.25px;line-height:11.25px;font-weight:400;color:#505258;-webkit-text-stroke-width:0.3px">Deployments</div>
<svg class="r" style="left:1386.70px;top:161.00px;" width="12" height="12" viewBox="0 0 12 12"><rect x="0.8" y="0.8" width="10.4" height="2.8" stroke="#505258" stroke-width="1.15" fill="none" stroke-linecap="round" stroke-linejoin="round"/><path d="M1.8 3.6 V11.2 H10.2 V3.6 M4.5 6 H7.5" stroke="#505258" stroke-width="1.15" fill="none" stroke-linecap="round" stroke-linejoin="round"/></svg>
<div class="t" style="left:1404.00px;top:162px;font-size:11.25px;line-height:11.25px;font-weight:400;color:#505258;-webkit-text-stroke-width:0.3px">Archived work items</div>
<svg class="r" style="left:1525.50px;top:161.00px;" width="12" height="12" viewBox="0 0 12 12"><rect x="1" y="1" width="10" height="10" rx="1.2" stroke="#505258" stroke-width="1.15" fill="none" stroke-linecap="round" stroke-linejoin="round"/><path d="M3.3 4 H8.7 M3.3 6.2 H8.7 M3.3 8.4 H6.2" stroke="#505258" stroke-width="1.15" fill="none" stroke-linecap="round" stroke-linejoin="round"/></svg>
<div class="t" style="left:1542.50px;top:162px;font-size:11.25px;line-height:11.25px;font-weight:400;color:#505258;-webkit-text-stroke-width:0.3px">Pages</div>
<svg class="r" style="left:1592.00px;top:161.00px;" width="12" height="12" viewBox="0 0 12 12"><rect x="1" y="1.5" width="10" height="9" fill="none" stroke="#44546f" stroke-width="1" stroke-dasharray="2 1"/><path d="M1 5 H11 M1 8 H11 M4.5 1.5 V10.5 M8 1.5 V10.5" stroke="#6b778c" stroke-width="1"/><path d="M2 10 L10.5 2" stroke="#292a2e" stroke-width="1.6"/></svg>
<div class="t" style="left:1609.00px;top:162px;font-size:11.25px;line-height:11.25px;font-weight:400;color:#1868db;-webkit-text-stroke-width:0.3px">Excel-like Bulk Issue Editor</div>
<svg class="r" style="left:1771.00px;top:161.00px;" width="12" height="12" viewBox="0 0 12 12"><path d="M5 7 L7 5 M6.3 2.7 L7.4 1.6 A2.4 2.4 0 0 1 10.8 5 L9.7 6.1 M5.7 9.3 L4.6 10.4 A2.4 2.4 0 0 1 1.2 7 L2.3 5.9" stroke="#505258" stroke-width="1.15" fill="none" stroke-linecap="round" stroke-linejoin="round"/></svg>
<div class="t" style="left:1788.50px;top:162px;font-size:11.25px;line-height:11.25px;font-weight:400;color:#505258;-webkit-text-stroke-width:0.3px">Shortcuts</div>
<svg class="r" style="left:1844.50px;top:165.50px;" width="8" height="5" viewBox="0 0 8 5"><path d="M0.8 0.8 L4 4 L7.2 0.8" stroke="#505258" stroke-width="1.1" fill="none"/></svg>
<svg class="r" style="left:1868.50px;top:161.00px;" width="12" height="12" viewBox="0 0 12 12"><path d="M6 0.5 V11.5 M0.5 6 H11.5" stroke="#505258" stroke-width="1.3"/></svg>
<div class="r" style="left:180.00px;top:178.30px;width:1740.00px;height:1.00px;background:#e3e4e8"></div>
<div class="r" style="left:1588.50px;top:177.00px;width:163.50px;height:2.20px;background:#1868db;border-radius:1px"></div>
<div class="r" style="left:202.50px;top:193.90px;width:16.50px;height:16.50px;background:radial-gradient(circle at 40% 35%,#6a6fd0,#3d46a8);border-radius:50%"></div>
<svg class="r" style="left:205.50px;top:197.00px;" width="11" height="11" viewBox="0 0 11 11"><path d="M1 3.5 H10 M1 7 H10 M4 1 V10 M7 1 V10" stroke="#fff" stroke-width="0.9" opacity="0.85"/><path d="M1.5 9.5 L9.5 1.5" stroke="#fff" stroke-width="1.3"/></svg>
<div class="t" style="left:233.90px;top:198px;font-size:10.4px;line-height:10.4px;font-weight:400;color:#5e6168;">Spreadsheet</div>
<svg class="r" style="left:311.00px;top:196.80px;" width="5" height="7" viewBox="0 0 5 7"><path d="M1 0.8 L4 3.5 L1 6.2" stroke="#292a2e" stroke-width="1.2" fill="none"/></svg>
<div class="r" style="left:325.30px;top:187.30px;width:224.00px;height:29.40px;border:1px solid #e0e2e6;border-radius:3px"></div>
<div class="t" style="left:331.50px;top:197px;font-size:11px;line-height:11px;font-weight:400;color:#292a2e;">PLAT: 2025</div>
<svg class="r" style="left:531.50px;top:200.00px;" width="9" height="5.5" viewBox="0 0 9 5.5"><path d="M0.8 0.8 L4.5 4.5 L8.2 0.8" stroke="#44474e" stroke-width="1.3" fill="none"/></svg>
<svg class="r" style="left:1712.00px;top:197.00px;" width="12" height="12" viewBox="0 0 12 12"><circle cx="9.8" cy="2" r="1.6" fill="#5c5c5c"/><circle cx="2" cy="6" r="1.6" fill="#5c5c5c"/><circle cx="9.8" cy="10" r="1.6" fill="#5c5c5c"/><path d="M2 6 L9.8 2 M2 6 L9.8 10" stroke="#5c5c5c" stroke-width="1.3"/></svg>
<div class="t" style="left:1736.50px;top:197px;font-size:10.5px;line-height:10.5px;font-weight:700;color:#5c5c5c;">JQL</div>
<svg class="r" style="left:1770.50px;top:197.00px;" width="11.5" height="11.5" viewBox="0 0 11.5 11.5"><circle cx="5.75" cy="5.75" r="5.6" fill="#5c5c5c"/><path d="M4 4.4 A1.8 1.8 0 1 1 5.8 6.3 V7.1" stroke="#fff" stroke-width="1.5" fill="none"/><circle cx="5.8" cy="9" r="0.85" fill="#fff"/></svg>
<svg class="r" style="left:1796.00px;top:197.00px;" width="13" height="12" viewBox="0 0 13 12"><path d="M1 1.5 A1 1 0 0 1 2 0.5 H7.5 L8.8 1.8 V5 H6 V7.5 H8.8 V10.5 A1 1 0 0 1 7.8 11.5 H2 A1 1 0 0 1 1 10.5Z" fill="#5c5c5c"/><path d="M6.5 6.2 H11 M9.8 4.8 L11.5 6.2 L9.8 7.6" stroke="#5c5c5c" stroke-width="1.1" fill="none"/><circle cx="3" cy="2.5" r="0.7" fill="#fff"/></svg>
<svg class="r" style="left:1821.00px;top:197.00px;" width="11.5" height="11.5" viewBox="0 0 11.5 11.5"><path d="M5.75 0.3 L7 1.8 L9.3 1.2 L9.5 3.5 L11.3 4.6 L10.2 6.6 L11 8.8 L8.8 9.4 L7.8 11.4 L5.75 10.3 L3.7 11.4 L2.7 9.4 L0.5 8.8 L1.3 6.6 L0.2 4.6 L2 3.5 L2.2 1.2 L4.5 1.8Z" fill="#5c5c5c"/><circle cx="5.75" cy="5.9" r="2.1" fill="#fff"/></svg>
<div class="r" style="left:1847.50px;top:197.50px;width:2.00px;height:2.00px;background:#5c5c5c;border-radius:50%"></div>
<div class="r" style="left:1847.50px;top:201.70px;width:2.00px;height:2.00px;background:#5c5c5c;border-radius:50%"></div>
<div class="r" style="left:1847.50px;top:205.90px;width:2.00px;height:2.00px;background:#5c5c5c;border-radius:50%"></div>
<div class="r" style="left:1850.80px;top:197.50px;width:2.00px;height:2.00px;background:#5c5c5c;border-radius:50%"></div>
<div class="r" style="left:1850.80px;top:201.70px;width:2.00px;height:2.00px;background:#5c5c5c;border-radius:50%"></div>
<div class="r" style="left:1850.80px;top:205.90px;width:2.00px;height:2.00px;background:#5c5c5c;border-radius:50%"></div>
<div class="r" style="left:1854.10px;top:197.50px;width:2.00px;height:2.00px;background:#5c5c5c;border-radius:50%"></div>
<div class="r" style="left:1854.10px;top:201.70px;width:2.00px;height:2.00px;background:#5c5c5c;border-radius:50%"></div>
<div class="r" style="left:1854.10px;top:205.90px;width:2.00px;height:2.00px;background:#5c5c5c;border-radius:50%"></div>
<div class="r" style="left:1857.40px;top:197.50px;width:2.00px;height:2.00px;background:#5c5c5c;border-radius:50%"></div>
<div class="r" style="left:1857.40px;top:201.70px;width:2.00px;height:2.00px;background:#5c5c5c;border-radius:50%"></div>
<div class="r" style="left:1857.40px;top:205.90px;width:2.00px;height:2.00px;background:#5c5c5c;border-radius:50%"></div>
<svg class="r" style="left:1872.50px;top:197.00px;" width="12" height="11.5" viewBox="0 0 12 11.5"><path d="M1 4 H4 L10.5 0.8 V10.7 L4 7.5 H1Z" fill="#5c5c5c"/><path d="M2.2 7.5 L3 11" stroke="#5c5c5c" stroke-width="1.6"/><path d="M10.7 4 H11.6 V7.5 H10.7" fill="#5c5c5c"/></svg>
<div class="r" style="left:202.50px;top:225.60px;width:1694.00px;height:731.50px;border:1px solid #e6e6e6;border-radius:4px;background:#fff"></div>
<div class="t" style="left:210.60px;top:241px;font-size:11.3px;line-height:11.3px;font-weight:400;color:#42526e;">249 records</div>
<svg class="r" style="left:287.00px;top:240.00px;" width="12" height="12" viewBox="0 0 12 12"><circle cx="6" cy="6" r="5.8" fill="#555"/><path d="M6 3 V9 M3 6 H9" stroke="#fff" stroke-width="1.6"/></svg>
<svg class="r" style="left:313.50px;top:239.50px;" width="12.5" height="12.5" viewBox="0 0 12.5 12.5"><path d="M10.8 5 A4.8 4.8 0 0 0 2 3.6 M1.2 7.5 A4.8 4.8 0 0 0 10 8.9" stroke="#666" stroke-width="1.4" fill="none"/><path d="M11.5 1.5 V5.5 H7.5Z M0.5 11 V7 H4.5Z" fill="#666"/></svg>
<div class="r" style="left:864.20px;top:235.00px;width:22.00px;height:22.00px;background:#f4f4f4;border-radius:3px"></div>
<div class="r" style="left:893.30px;top:235.00px;width:22.00px;height:22.00px;background:#f4f4f4;border-radius:3px"></div>
<div class="r" style="left:921.40px;top:235.00px;width:22.00px;height:22.00px;background:#f4f4f4;border-radius:3px"></div>
<div class="r" style="left:959.80px;top:235.00px;width:22.00px;height:22.00px;background:#f4f4f4;border-radius:3px"></div>
<div class="r" style="left:989.30px;top:235.00px;width:22.00px;height:22.00px;background:#f4f4f4;border-radius:3px"></div>
<div class="r" style="left:1018.40px;top:235.00px;width:22.00px;height:22.00px;background:#f4f4f4;border-radius:3px"></div>
<div class="r" style="left:1057.00px;top:235.00px;width:22.00px;height:22.00px;background:#f4f4f4;border-radius:3px"></div>
<div class="r" style="left:1085.40px;top:235.00px;width:22.00px;height:22.00px;background:#f4f4f4;border-radius:3px"></div>
<div class="r" style="left:1124.00px;top:235.00px;width:22.00px;height:22.00px;background:#f4f4f4;border-radius:3px"></div>
<div class="r" style="left:1152.00px;top:235.00px;width:22.00px;height:22.00px;background:#f4f4f4;border-radius:3px"></div>
<div class="r" style="left:1046.50px;top:235.00px;width:1.00px;height:22.00px;background:#ececec"></div>
<svg class="r" style="left:868.20px;top:239.00px;" width="14" height="14" viewBox="0 0 14 14"><path d="M1.5 3.5 H3.5 C6.8 3.5 7.2 10.5 10.5 10.5 H12.5 M1.5 10.5 H3.5 C6.8 10.5 7.2 3.5 10.5 3.5 H12.5" stroke="#666" stroke-width="1.5" fill="none"/><path d="M10.8 1.2 L13.2 3.5 L10.8 5.8 M10.8 8.2 L13.2 10.5 L10.8 12.8 M3.2 1.2 L0.8 3.5 L3.2 5.8 M3.2 8.2 L0.8 10.5 L3.2 12.8" stroke="#666" stroke-width="1.5" fill="none"/></svg>
<svg class="r" style="left:897.30px;top:239.00px;" width="14" height="14" viewBox="0 0 14 14"><path d="M1 1.5 H13 L8.7 7 V12.5 L5.3 11 V7Z" fill="#666"/></svg>
<svg class="r" style="left:925.40px;top:239.00px;" width="14" height="14" viewBox="0 0 14 14"><path d="M6 2 A5.5 5.5 0 1 0 11.8 8.2 H6Z" fill="#666"/><path d="M7.2 0.8 A5.5 5.5 0 0 1 12.6 6.2 H7.2Z" fill="#666"/><path d="M8.3 3.6 H11 M8.3 5 H12" stroke="#f4f4f4" stroke-width="0.6"/></svg>
<svg class="r" style="left:963.80px;top:239.00px;" width="14" height="14" viewBox="0 0 14 14"><rect x="1" y="1" width="3.6" height="3.6" rx="0.8" fill="#666"/><rect x="9.4" y="1" width="3.6" height="3.6" rx="0.8" fill="#666"/><rect x="1" y="9.4" width="3.6" height="3.6" rx="0.8" fill="#666"/><rect x="9.4" y="9.4" width="3.6" height="3.6" rx="0.8" fill="#666"/><path d="M5.5 2.8 H8.5 M5.5 11.2 H8.5 M2.8 5.5 V8.5 M11.2 5.5 V8.5" stroke="#666" stroke-width="0.8" stroke-dasharray="1 1"/></svg>
<svg class="r" style="left:993.30px;top:239.00px;" width="14" height="14" viewBox="0 0 14 14"><path d="M8.5 1 L13 5.5 L8.5 9 L5 5.5Z" fill="#666"/><path d="M6 7.8 L2 11.8" stroke="#666" stroke-width="1.8"/><circle cx="1.6" cy="12.3" r="1" fill="#666"/></svg>
<svg class="r" style="left:1022.40px;top:239.00px;" width="14" height="14" viewBox="0 0 14 14"><path d="M2 1.5 H12 V4 H6 L9 7 L6 10 H12 V12.5 H2 V11 L5.8 7 L2 3Z" fill="#666"/></svg>
<svg class="r" style="left:1061.00px;top:239.00px;" width="14" height="14" viewBox="0 0 14 14"><rect x="1" y="1" width="3" height="12" fill="#666"/><rect x="5" y="1" width="3" height="12" fill="#666"/><rect x="9" y="1" width="3" height="6" fill="#666"/><path d="M7 13.5 L11 9 M10 8 A2 2 0 1 0 12.5 10.5" stroke="#666" stroke-width="1.5" fill="none"/></svg>
<svg class="r" style="left:1089.40px;top:239.00px;" width="14" height="14" viewBox="0 0 14 14"><rect x="1" y="1" width="5.5" height="5.5" rx="1.2" fill="#666"/><rect x="7.5" y="1" width="5.5" height="5.5" rx="1.2" fill="#666"/><rect x="1" y="7.5" width="5.5" height="5.5" rx="1.2" fill="#666"/><rect x="7.5" y="7.5" width="5.5" height="5.5" rx="1.2" fill="#666"/></svg>
<svg class="r" style="left:1128.00px;top:239.00px;" width="14" height="14" viewBox="0 0 14 14"><rect x="1.5" y="0.8" width="3.2" height="3.2" rx="1" fill="#666"/><rect x="8.5" y="5.2" width="3.8" height="3" rx="1" fill="#666"/><rect x="8.5" y="10" width="3.8" height="3" rx="1" fill="#666"/><path d="M3.1 4 V11.5 H8.5 M3.1 6.7 H8.5" stroke="#666" stroke-width="1" fill="none"/></svg>
<svg class="r" style="left:1156.00px;top:239.00px;" width="14" height="14" viewBox="0 0 14 14"><path d="M2 7 L7 2 L12 7 M2 12 L7 7 L12 12" stroke="#9a9a9a" stroke-width="1.3" fill="none"/></svg>
<div class="r" style="left:1709.00px;top:235.20px;width:74.00px;height:21.50px;border:1px solid #dfe1e6;border-radius:4px;background:#fff"></div>
<svg class="r" style="left:1716.00px;top:240.50px;" width="11" height="11" viewBox="0 0 11 11"><circle cx="4.6" cy="4.6" r="3.7" stroke="#6b778c" stroke-width="1.2" fill="none"/><path d="M7.3 7.3 L10 10" stroke="#6b778c" stroke-width="1.3"/></svg>
<div class="t" style="left:1733.00px;top:241px;font-size:10.8px;line-height:10.8px;font-weight:400;color:#42526e;">Search</div>
<div class="r" style="left:1802.60px;top:235.20px;width:21.50px;height:21.50px;background:#f4f4f4;border-radius:3px"></div>
<div class="r" style="left:1830.00px;top:235.20px;width:21.50px;height:21.50px;background:#f4f4f4;border-radius:3px"></div>
<div class="r" style="left:1867.00px;top:235.20px;width:21.50px;height:21.50px;background:#f4f4f4;border-radius:3px"></div>
<svg class="r" style="left:1808.50px;top:241.50px;" width="10" height="6" viewBox="0 0 10 6"><path d="M1.5 4.5 A5 4 0 0 1 9.5 3.5" stroke="#888" stroke-width="1.3" fill="none"/><path d="M0.5 1 V5.5 H4.5Z" fill="#888"/></svg>
<svg class="r" style="left:1836.00px;top:241.50px;" width="10" height="6" viewBox="0 0 10 6"><path d="M8.5 4.5 A5 4 0 0 0 0.5 3.5" stroke="#888" stroke-width="1.3" fill="none"/><path d="M9.5 1 V5.5 H5.5Z" fill="#888"/></svg>
<svg class="r" style="left:1872.50px;top:240.00px;" width="10.5" height="11.5" viewBox="0 0 10.5 11.5"><path d="M0.5 1.5 A1 1 0 0 1 1.5 0.5 H8 L10 2.5 V10 A1 1 0 0 1 9 11 H1.5 A1 1 0 0 1 0.5 10Z" fill="#aaa"/><rect x="2.3" y="1.5" width="5.5" height="2.5" fill="#f4f4f4"/><circle cx="5.3" cy="7.5" r="1.5" fill="#f4f4f4"/></svg>
<div class="r" style="left:0;top:0;width:1920px;height:957px;overflow:hidden">
<div class="r" style="left:203.00px;top:296.00px;width:38.00px;height:661.00px;background:#fafafb"></div>
<div class="r" style="left:241.00px;top:296.00px;width:107.00px;height:90.00px;background:#f1f1f1"></div>
<div class="r" style="left:348.00px;top:296.00px;width:90.00px;height:661.00px;background:#f1f1f1"></div>
<div class="r" style="left:618.00px;top:296.00px;width:90.00px;height:90.00px;background:#f1f1f1"></div>
<div class="r" style="left:708.00px;top:296.00px;width:90.00px;height:661.00px;background:#f1f1f1"></div>
<div class="r" style="left:1006.00px;top:296.00px;width:90.00px;height:661.00px;background:#f1f1f1"></div>
<div class="r" style="left:203.00px;top:265.00px;width:893.00px;height:2.70px;background:#dadada"></div>
<div class="r" style="left:1096.00px;top:265.00px;width:800.00px;height:2.70px;background:#e2e2e2"></div>
<div class="r" style="left:203.00px;top:294.10px;width:893.00px;height:1.90px;background:#d6d6d6"></div>
<div class="r" style="left:203.00px;top:317.00px;width:893.00px;height:1.00px;background:#d7d7d7"></div>
<div class="r" style="left:203.00px;top:339.00px;width:893.00px;height:1.00px;background:#d7d7d7"></div>
<div class="r" style="left:203.00px;top:362.00px;width:893.00px;height:1.00px;background:#d7d7d7"></div>
<div class="r" style="left:203.00px;top:384.00px;width:893.00px;height:1.00px;background:#d7d7d7"></div>
<div class="r" style="left:203.00px;top:407.00px;width:893.00px;height:1.00px;background:#d7d7d7"></div>
<div class="r" style="left:203.00px;top:429.00px;width:893.00px;height:1.00px;background:#d7d7d7"></div>
<div class="r" style="left:203.00px;top:452.00px;width:893.00px;height:1.00px;background:#d7d7d7"></div>
<div class="r" style="left:203.00px;top:474.00px;width:893.00px;height:1.00px;background:#d7d7d7"></div>
<div class="r" style="left:203.00px;top:497.00px;width:893.00px;height:1.00px;background:#d7d7d7"></div>
<div class="r" style="left:203.00px;top:519.00px;width:893.00px;height:1.00px;background:#d7d7d7"></div>
<div class="r" style="left:203.00px;top:542.00px;width:893.00px;height:1.00px;background:#d7d7d7"></div>
<div class="r" style="left:203.00px;top:564.00px;width:893.00px;height:1.00px;background:#d7d7d7"></div>
<div class="r" style="left:203.00px;top:587.00px;width:893.00px;height:1.00px;background:#d7d7d7"></div>
<div class="r" style="left:203.00px;top:609.00px;width:893.00px;height:1.00px;background:#d7d7d7"></div>
<div class="r" style="left:203.00px;top:632.00px;width:893.00px;height:1.00px;background:#d7d7d7"></div>
<div class="r" style="left:203.00px;top:654.00px;width:893.00px;height:1.00px;background:#d7d7d7"></div>
<div class="r" style="left:203.00px;top:677.00px;width:893.00px;height:1.00px;background:#d7d7d7"></div>
<div class="r" style="left:203.00px;top:699.00px;width:893.00px;height:1.00px;background:#d7d7d7"></div>
<div class="r" style="left:203.00px;top:722.00px;width:893.00px;height:1.00px;background:#d7d7d7"></div>
<div class="r" style="left:203.00px;top:744.00px;width:893.00px;height:1.00px;background:#d7d7d7"></div>
<div class="r" style="left:203.00px;top:767.00px;width:893.00px;height:1.00px;background:#d7d7d7"></div>
<div class="r" style="left:203.00px;top:789.00px;width:893.00px;height:1.00px;background:#d7d7d7"></div>
<div class="r" style="left:203.00px;top:812.00px;width:893.00px;height:1.00px;background:#d7d7d7"></div>
<div class="r" style="left:203.00px;top:834.00px;width:893.00px;height:1.00px;background:#d7d7d7"></div>
<div class="r" style="left:203.00px;top:857.00px;width:893.00px;height:1.00px;background:#d7d7d7"></div>
<div class="r" style="left:203.00px;top:879.00px;width:893.00px;height:1.00px;background:#d7d7d7"></div>
<div class="r" style="left:203.00px;top:902.00px;width:893.00px;height:1.00px;background:#d7d7d7"></div>
<div class="r" style="left:203.00px;top:924.00px;width:893.00px;height:1.00px;background:#d7d7d7"></div>
<div class="r" style="left:203.00px;top:947.00px;width:893.00px;height:1.00px;background:#d7d7d7"></div>
<div class="r" style="left:203.00px;top:969.00px;width:893.00px;height:1.00px;background:#d7d7d7"></div>
<div class="r" style="left:203.00px;top:267.00px;width:1.00px;height:690.00px;background:#d3d3d3"></div>
<div class="r" style="left:241.00px;top:267.00px;width:1.00px;height:690.00px;background:#d3d3d3"></div>
<div class="r" style="left:348.00px;top:267.00px;width:1.00px;height:690.00px;background:#d3d3d3"></div>
<div class="r" style="left:438.00px;top:267.00px;width:1.00px;height:690.00px;background:#d3d3d3"></div>
<div class="r" style="left:528.00px;top:267.00px;width:1.00px;height:690.00px;background:#d3d3d3"></div>
<div class="r" style="left:618.00px;top:267.00px;width:1.00px;height:690.00px;background:#d3d3d3"></div>
<div class="r" style="left:708.00px;top:267.00px;width:1.00px;height:690.00px;background:#d3d3d3"></div>
<div class="r" style="left:798.00px;top:267.00px;width:1.00px;height:690.00px;background:#d3d3d3"></div>
<div class="r" style="left:888.00px;top:267.00px;width:1.00px;height:690.00px;background:#d3d3d3"></div>
<div class="r" style="left:1006.00px;top:267.00px;width:1.00px;height:690.00px;background:#d3d3d3"></div>
<div class="r" style="left:1096.00px;top:267.00px;width:1.00px;height:690.00px;background:#d3d3d3"></div>
<div class="r" style="left:619.00px;top:267.00px;width:9.00px;height:690.00px;background:linear-gradient(90deg,rgba(0,0,0,0.07),rgba(0,0,0,0))"></div>
<div class="t" style="left:241.00px;top:277px;width:107px;text-align:center;font-size:9.2px;line-height:9.2px;font-weight:700;color:#2e3b52;">Issue Type</div>
<svg class="r" style="left:337.00px;top:287.80px;" width="6" height="4" viewBox="0 0 6 4"><path d="M0.8 0.8 L3 3 L5.2 0.8" stroke="#2e3b52" stroke-width="1.4" fill="none"/></svg>
<div class="t" style="left:348.00px;top:277px;width:90px;text-align:center;font-size:9.2px;line-height:9.2px;font-weight:700;color:#2e3b52;">Key</div>
<svg class="r" style="left:427.00px;top:287.80px;" width="6" height="4" viewBox="0 0 6 4"><path d="M0.8 0.8 L3 3 L5.2 0.8" stroke="#2e3b52" stroke-width="1.4" fill="none"/></svg>
<div class="t" style="left:438.00px;top:277px;width:90px;text-align:center;font-size:9.2px;line-height:9.2px;font-weight:700;color:#2e3b52;">Summary</div>
<svg class="r" style="left:517.00px;top:287.80px;" width="6" height="4" viewBox="0 0 6 4"><path d="M0.8 0.8 L3 3 L5.2 0.8" stroke="#2e3b52" stroke-width="1.4" fill="none"/></svg>
<div class="t" style="left:528.00px;top:277px;width:90px;text-align:center;font-size:9.2px;line-height:9.2px;font-weight:700;color:#2e3b52;">Status</div>
<svg class="r" style="left:607.00px;top:287.80px;" width="6" height="4" viewBox="0 0 6 4"><path d="M0.8 0.8 L3 3 L5.2 0.8" stroke="#2e3b52" stroke-width="1.4" fill="none"/></svg>
<div class="t" style="left:618.00px;top:277px;width:90px;text-align:center;font-size:9.2px;line-height:9.2px;font-weight:700;color:#2e3b52;">Story Points</div>
<svg class="r" style="left:697.00px;top:287.80px;" width="6" height="4" viewBox="0 0 6 4"><path d="M0.8 0.8 L3 3 L5.2 0.8" stroke="#2e3b52" stroke-width="1.4" fill="none"/></svg>
<div class="t" style="left:708.00px;top:277px;width:90px;text-align:center;font-size:9.2px;line-height:9.2px;font-weight:700;color:#2e3b52;">Created</div>
<svg class="r" style="left:787.00px;top:287.80px;" width="6" height="4" viewBox="0 0 6 4"><path d="M0.8 0.8 L3 3 L5.2 0.8" stroke="#2e3b52" stroke-width="1.4" fill="none"/></svg>
<div class="t" style="left:798.00px;top:277px;width:90px;text-align:center;font-size:9.2px;line-height:9.2px;font-weight:700;color:#2e3b52;">Assignee</div>
<svg class="r" style="left:877.00px;top:287.80px;" width="6" height="4" viewBox="0 0 6 4"><path d="M0.8 0.8 L3 3 L5.2 0.8" stroke="#2e3b52" stroke-width="1.4" fill="none"/></svg>
<div class="t" style="left:888.00px;top:277px;width:118px;text-align:center;font-size:9.2px;line-height:9.2px;font-weight:700;color:#2e3b52;">Reporter</div>
<svg class="r" style="left:995.00px;top:287.80px;" width="6" height="4" viewBox="0 0 6 4"><path d="M0.8 0.8 L3 3 L5.2 0.8" stroke="#2e3b52" stroke-width="1.4" fill="none"/></svg>
<div class="t" style="left:1006.00px;top:277px;width:90px;text-align:center;font-size:9.2px;line-height:9.2px;font-weight:700;color:#2e3b52;">History</div>
<svg class="r" style="left:1085.00px;top:287.80px;" width="6" height="4" viewBox="0 0 6 4"><path d="M0.8 0.8 L3 3 L5.2 0.8" stroke="#2e3b52" stroke-width="1.4" fill="none"/></svg>
<div class="t" style="left:203.00px;top:302px;width:38px;text-align:center;font-size:9.6px;line-height:9.6px;font-weight:700;color:#1f2a3c;letter-spacing:-0.3px;-webkit-text-stroke-width:0">1</div>
<svg class="r" style="left:250.50px;top:301.00px;" width="12" height="12" viewBox="0 0 12 12"><rect x="1" y="1" width="5.2" height="5.2" rx="1.8" stroke="#2f6fe4" stroke-width="1.3" fill="none"/><rect x="5.8" y="5.8" width="5.2" height="5.2" rx="1.8" stroke="#2f6fe4" stroke-width="1.3" fill="none"/></svg>
<div class="t" style="left:358.00px;top:302px;font-size:10.3px;line-height:10.3px;font-weight:400;color:#2a63d9;">PLAT-33513</div>
<div class="t" style="left:448.70px;top:302px;font-size:10px;line-height:10px;font-weight:400;color:#505258;">Test 4</div>
<div class="r" style="left:535.00px;top:300.40px;width:63.70px;height:12.60px;background:#8fb8f6;border-radius:2px;border-top:1px solid #7c9fd8"></div>
<div class="t" style="left:538.80px;top:304px;font-size:8.2px;line-height:8.2px;font-weight:700;color:#0b2f66;">IN PROGRESS</div>
<div class="r" style="left:715.30px;top:300.20px;width:73.40px;height:12.40px;border:1px solid #c6c8cc;border-radius:2px"></div>
<div class="t" style="left:718.80px;top:303px;font-size:8.7px;line-height:8.7px;font-weight:700;color:#253452;">03/SEP/25 11:...</div>
<div class="r" style="left:808.00px;top:301.00px;width:12.20px;height:12.20px;background:#ffab1f;border-radius:50%"></div>
<div class="r" style="left:811.30px;top:303.80px;width:5.60px;height:7.40px;background:#fde3cf;border-radius:45%"></div>
<div class="r" style="left:811.10px;top:303.00px;width:6.00px;height:2.60px;background:#3b2a20;border-radius:3px 3px 1px 1px"></div>
<div class="t" style="left:823.70px;top:302px;font-size:9.7px;line-height:9.7px;font-weight:400;color:#505258;">Ryan Lee</div>
<div class="r" style="left:897.30px;top:301.00px;width:12.20px;height:12.20px;background:radial-gradient(circle at 50% 45%,#c9cacc 0,#8d8f92 60%,#8e9194 100%);border-radius:50%;overflow:hidden"></div>
<div class="r" style="left:901.33px;top:302.71px;width:4.15px;height:2.44px;background:#3b2e27;border-radius:40% 40% 10% 10%"></div>
<div class="r" style="left:901.57px;top:304.29px;width:3.66px;height:5.12px;background:#b88a70;border-radius:40%"></div>
<div class="r" style="left:901.69px;top:305.64px;width:3.42px;height:0.73px;background:rgba(40,30,25,0.55)"></div>
<div class="r" style="left:900.23px;top:309.78px;width:6.34px;height:2.93px;background:#6d6a68;border-radius:45% 45% 30% 30%"></div>
<div class="t" style="left:913.60px;top:302px;font-size:10.3px;line-height:10.3px;font-weight:400;color:#505258;">victor.law</div>
<div class="t" style="left:1016.50px;top:302px;font-size:9.8px;line-height:9.8px;font-weight:400;color:#505258;">View issue hi...</div>
<div class="t" style="left:203.00px;top:324px;width:38px;text-align:center;font-size:9.6px;line-height:9.6px;font-weight:700;color:#1f2a3c;letter-spacing:-0.3px;-webkit-text-stroke-width:0">2</div>
<svg class="r" style="left:250.50px;top:323.00px;" width="12" height="12" viewBox="0 0 12 12"><rect x="1" y="1" width="5.2" height="5.2" rx="1.8" stroke="#2f6fe4" stroke-width="1.3" fill="none"/><rect x="5.8" y="5.8" width="5.2" height="5.2" rx="1.8" stroke="#2f6fe4" stroke-width="1.3" fill="none"/></svg>
<div class="t" style="left:358.00px;top:324px;font-size:10.3px;line-height:10.3px;font-weight:400;color:#2a63d9;">PLAT-33512</div>
<div class="t" style="left:448.70px;top:324px;font-size:10px;line-height:10px;font-weight:400;color:#505258;">Test 3</div>
<div class="r" style="left:535.00px;top:322.40px;width:30.80px;height:12.60px;background:#a3d86a;border-radius:2px;border-top:1px solid #8ab85a"></div>
<div class="t" style="left:538.80px;top:326px;font-size:8.2px;line-height:8.2px;font-weight:700;color:#1c3a0c;">DONE</div>
<div class="r" style="left:715.30px;top:322.20px;width:73.40px;height:12.40px;border:1px solid #c6c8cc;border-radius:2px"></div>
<div class="t" style="left:718.80px;top:325px;font-size:8.7px;line-height:8.7px;font-weight:700;color:#253452;">03/SEP/25 11:...</div>
<div class="r" style="left:808.00px;top:323.00px;width:12.20px;height:12.20px;background:#1f66e8;border-radius:50%"></div>
<div class="r" style="left:810.60px;top:324.80px;width:7.00px;height:8.50px;background:#172038;border-radius:50%"></div>
<div class="r" style="left:811.80px;top:327.20px;width:4.60px;height:6.00px;background:#f4d0b8;border-radius:45%"></div>
<div class="t" style="left:823.70px;top:324px;font-size:9.7px;line-height:9.7px;font-weight:400;color:#505258;">Alana Gra...</div>
<div class="r" style="left:897.30px;top:323.00px;width:12.20px;height:12.20px;background:radial-gradient(circle at 50% 45%,#c9cacc 0,#8d8f92 60%,#8e9194 100%);border-radius:50%;overflow:hidden"></div>
<div class="r" style="left:901.33px;top:324.71px;width:4.15px;height:2.44px;background:#3b2e27;border-radius:40% 40% 10% 10%"></div>
<div class="r" style="left:901.57px;top:326.29px;width:3.66px;height:5.12px;background:#b88a70;border-radius:40%"></div>
<div class="r" style="left:901.69px;top:327.64px;width:3.42px;height:0.73px;background:rgba(40,30,25,0.55)"></div>
<div class="r" style="left:900.23px;top:331.78px;width:6.34px;height:2.93px;background:#6d6a68;border-radius:45% 45% 30% 30%"></div>
<div class="t" style="left:913.60px;top:324px;font-size:10.3px;line-height:10.3px;font-weight:400;color:#505258;">victor.law</div>
<div class="t" style="left:1016.50px;top:324px;font-size:9.8px;line-height:9.8px;font-weight:400;color:#505258;">View issue hi...</div>
<div class="t" style="left:203.00px;top:347px;width:38px;text-align:center;font-size:9.6px;line-height:9.6px;font-weight:700;color:#1f2a3c;letter-spacing:-0.3px;-webkit-text-stroke-width:0">3</div>
<svg class="r" style="left:250.50px;top:346.00px;" width="12" height="12" viewBox="0 0 12 12"><rect x="1" y="1" width="5.2" height="5.2" rx="1.8" stroke="#2f6fe4" stroke-width="1.3" fill="none"/><rect x="5.8" y="5.8" width="5.2" height="5.2" rx="1.8" stroke="#2f6fe4" stroke-width="1.3" fill="none"/></svg>
<div class="t" style="left:358.00px;top:347px;font-size:10.3px;line-height:10.3px;font-weight:400;color:#2a63d9;">PLAT-33511</div>
<div class="t" style="left:448.70px;top:347px;font-size:10px;line-height:10px;font-weight:400;color:#505258;">Test 2</div>
<div class="r" style="left:535.00px;top:345.40px;width:63.70px;height:12.60px;background:#8fb8f6;border-radius:2px;border-top:1px solid #7c9fd8"></div>
<div class="t" style="left:538.80px;top:349px;font-size:8.2px;line-height:8.2px;font-weight:700;color:#0b2f66;">IN PROGRESS</div>
<div class="r" style="left:715.30px;top:345.20px;width:73.40px;height:12.40px;border:1px solid #c6c8cc;border-radius:2px"></div>
<div class="t" style="left:718.80px;top:348px;font-size:8.7px;line-height:8.7px;font-weight:700;color:#253452;">03/SEP/25 11:...</div>
<div class="r" style="left:808.00px;top:346.00px;width:12.20px;height:12.20px;background:#8a7fe0;border-radius:50%"></div>
<div class="r" style="left:811.30px;top:348.80px;width:5.60px;height:7.60px;background:#e8c2a8;border-radius:45%"></div>
<div class="r" style="left:811.10px;top:348.00px;width:6.00px;height:2.60px;background:#4b4b55;border-radius:3px 3px 1px 1px"></div>
<div class="t" style="left:823.70px;top:347px;font-size:9.7px;line-height:9.7px;font-weight:400;color:#505258;">Mitch Dav...</div>
<div class="r" style="left:897.30px;top:346.00px;width:12.20px;height:12.20px;background:radial-gradient(circle at 50% 45%,#c9cacc 0,#8d8f92 60%,#8e9194 100%);border-radius:50%;overflow:hidden"></div>
<div class="r" style="left:901.33px;top:347.71px;width:4.15px;height:2.44px;background:#3b2e27;border-radius:40% 40% 10% 10%"></div>
<div class="r" style="left:901.57px;top:349.29px;width:3.66px;height:5.12px;background:#b88a70;border-radius:40%"></div>
<div class="r" style="left:901.69px;top:350.64px;width:3.42px;height:0.73px;background:rgba(40,30,25,0.55)"></div>
<div class="r" style="left:900.23px;top:354.78px;width:6.34px;height:2.93px;background:#6d6a68;border-radius:45% 45% 30% 30%"></div>
<div class="t" style="left:913.60px;top:347px;font-size:10.3px;line-height:10.3px;font-weight:400;color:#505258;">victor.law</div>
<div class="t" style="left:1016.50px;top:347px;font-size:9.8px;line-height:9.8px;font-weight:400;color:#505258;">View issue hi...</div>
<div class="t" style="left:203.00px;top:369px;width:38px;text-align:center;font-size:9.6px;line-height:9.6px;font-weight:700;color:#1f2a3c;letter-spacing:-0.3px;-webkit-text-stroke-width:0">4</div>
<svg class="r" style="left:250.50px;top:368.00px;" width="12" height="12" viewBox="0 0 12 12"><rect x="1" y="1" width="5.2" height="5.2" rx="1.8" stroke="#2f6fe4" stroke-width="1.3" fill="none"/><rect x="5.8" y="5.8" width="5.2" height="5.2" rx="1.8" stroke="#2f6fe4" stroke-width="1.3" fill="none"/></svg>
<div class="t" style="left:358.00px;top:369px;font-size:10.3px;line-height:10.3px;font-weight:400;color:#2a63d9;">PLAT-33510</div>
<div class="t" style="left:448.70px;top:369px;font-size:10px;line-height:10px;font-weight:400;color:#505258;">Test 1</div>
<div class="r" style="left:535.00px;top:367.20px;width:33.80px;height:13.30px;background:#dddee1;border:1px solid #b9bec8;border-radius:2.5px"></div>
<div class="t" style="left:538.60px;top:370px;font-size:8.3px;line-height:8.3px;font-weight:700;color:#292a2e;">TO DO</div>
<div class="r" style="left:715.30px;top:367.20px;width:73.40px;height:12.40px;border:1px solid #c6c8cc;border-radius:2px"></div>
<div class="t" style="left:718.80px;top:370px;font-size:8.7px;line-height:8.7px;font-weight:700;color:#253452;">03/SEP/25 11:...</div>
<div class="r" style="left:808.00px;top:368.00px;width:12.20px;height:12.20px;background:#8a7fe0;border-radius:50%"></div>
<div class="r" style="left:811.30px;top:370.80px;width:5.60px;height:7.60px;background:#e8c2a8;border-radius:45%"></div>
<div class="r" style="left:811.10px;top:370.00px;width:6.00px;height:2.60px;background:#4b4b55;border-radius:3px 3px 1px 1px"></div>
<div class="t" style="left:823.70px;top:369px;font-size:9.7px;line-height:9.7px;font-weight:400;color:#505258;">Mitch Dav...</div>
<svg class="r" style="left:897.30px;top:368.00px;" width="12.5" height="12.5" viewBox="0 0 12.5 12.5"><defs><clipPath id="gc"><circle cx="6.25" cy="6.25" r="4.9"/></clipPath></defs><circle cx="6.25" cy="6.25" r="6.1" fill="#74777e"/><g clip-path="url(#gc)"><circle cx="6.25" cy="4.6" r="2.3" fill="#fff"/><ellipse cx="6.25" cy="11.2" rx="3.7" ry="3.6" fill="#fff"/></g></svg>
<div class="t" style="left:913.60px;top:369px;font-size:10.3px;line-height:10.3px;font-weight:400;color:#505258;">Adam Miro</div>
<div class="t" style="left:1016.50px;top:369px;font-size:9.8px;line-height:9.8px;font-weight:400;color:#505258;">View issue hi...</div>
<div class="t" style="left:203.00px;top:392px;width:38px;text-align:center;font-size:9.6px;line-height:9.6px;font-weight:700;color:#1f2a3c;letter-spacing:-0.3px;-webkit-text-stroke-width:0">5</div>
<svg class="r" style="left:252.00px;top:391.00px;" width="9" height="12" viewBox="0 0 9 12"><path d="M1.2 1 H7.8 V11 L4.5 8 L1.2 11Z" stroke="#6a9a23" stroke-width="1.15" fill="none" stroke-linejoin="round"/></svg>
<div class="t" style="left:358.00px;top:392px;font-size:10.3px;line-height:10.3px;font-weight:400;color:#2a63d9;">PLAT-33509</div>
<div class="t" style="left:448.70px;top:392px;font-size:10px;line-height:10px;font-weight:400;color:#505258;">Salesforce se...</div>
<div class="r" style="left:535.00px;top:390.40px;width:63.70px;height:12.60px;background:#8fb8f6;border-radius:2px;border-top:1px solid #7c9fd8"></div>
<div class="t" style="left:538.80px;top:394px;font-size:8.2px;line-height:8.2px;font-weight:700;color:#0b2f66;">IN PROGRESS</div>
<div class="t" style="left:627.90px;top:393px;font-size:9px;line-height:9px;font-weight:400;color:#505258;">3</div>
<div class="r" style="left:715.30px;top:390.20px;width:73.40px;height:12.40px;border:1px solid #c6c8cc;border-radius:2px"></div>
<div class="t" style="left:718.80px;top:393px;font-size:8.7px;line-height:8.7px;font-weight:700;color:#253452;">18/APR/25 9:...</div>
<div class="r" style="left:808.00px;top:391.00px;width:12.20px;height:12.20px;background:#1f66e8;border-radius:50%"></div>
<div class="r" style="left:810.60px;top:392.80px;width:7.00px;height:8.50px;background:#172038;border-radius:50%"></div>
<div class="r" style="left:811.80px;top:395.20px;width:4.60px;height:6.00px;background:#f4d0b8;border-radius:45%"></div>
<div class="t" style="left:823.70px;top:392px;font-size:9.7px;line-height:9.7px;font-weight:400;color:#505258;">Alana Gra...</div>
<svg class="r" style="left:897.30px;top:391.00px;" width="12.5" height="12.5" viewBox="0 0 12.5 12.5"><defs><clipPath id="gc"><circle cx="6.25" cy="6.25" r="4.9"/></clipPath></defs><circle cx="6.25" cy="6.25" r="6.1" fill="#74777e"/><g clip-path="url(#gc)"><circle cx="6.25" cy="4.6" r="2.3" fill="#fff"/><ellipse cx="6.25" cy="11.2" rx="3.7" ry="3.6" fill="#fff"/></g></svg>
<div class="t" style="left:913.60px;top:392px;font-size:10.3px;line-height:10.3px;font-weight:400;color:#505258;">John Doe</div>
<div class="t" style="left:1016.50px;top:392px;font-size:9.8px;line-height:9.8px;font-weight:400;color:#505258;">View issue hi...</div>
<div class="t" style="left:203.00px;top:414px;width:38px;text-align:center;font-size:9.6px;line-height:9.6px;font-weight:700;color:#1f2a3c;letter-spacing:-0.3px;-webkit-text-stroke-width:0">6</div>
<svg class="r" style="left:252.00px;top:413.00px;" width="9" height="12" viewBox="0 0 9 12"><path d="M1.2 1 H7.8 V11 L4.5 8 L1.2 11Z" stroke="#6a9a23" stroke-width="1.15" fill="none" stroke-linejoin="round"/></svg>
<div class="t" style="left:358.00px;top:414px;font-size:10.3px;line-height:10.3px;font-weight:400;color:#2a63d9;">PLAT-33508</div>
<div class="t" style="left:448.70px;top:414px;font-size:10px;line-height:10px;font-weight:400;color:#505258;">Commerce ap...</div>
<div class="r" style="left:535.00px;top:412.40px;width:30.80px;height:12.60px;background:#a3d86a;border-radius:2px;border-top:1px solid #8ab85a"></div>
<div class="t" style="left:538.80px;top:416px;font-size:8.2px;line-height:8.2px;font-weight:700;color:#1c3a0c;">DONE</div>
<div class="t" style="left:627.90px;top:415px;font-size:9px;line-height:9px;font-weight:400;color:#505258;">5</div>
<div class="r" style="left:715.30px;top:412.20px;width:73.40px;height:12.40px;border:1px solid #c6c8cc;border-radius:2px"></div>
<div class="t" style="left:718.80px;top:415px;font-size:8.7px;line-height:8.7px;font-weight:700;color:#253452;">18/APR/25 9:...</div>
<div class="r" style="left:808.00px;top:413.00px;width:12.20px;height:12.20px;background:radial-gradient(circle at 50% 45%,#c9cacc 0,#8d8f92 60%,#8e9194 100%);border-radius:50%;overflow:hidden"></div>
<div class="r" style="left:812.03px;top:414.71px;width:4.15px;height:2.44px;background:#3b2e27;border-radius:40% 40% 10% 10%"></div>
<div class="r" style="left:812.27px;top:416.29px;width:3.66px;height:5.12px;background:#b88a70;border-radius:40%"></div>
<div class="r" style="left:812.39px;top:417.64px;width:3.42px;height:0.73px;background:rgba(40,30,25,0.55)"></div>
<div class="r" style="left:810.93px;top:421.78px;width:6.34px;height:2.93px;background:#6d6a68;border-radius:45% 45% 30% 30%"></div>
<div class="t" style="left:823.70px;top:414px;font-size:9.7px;line-height:9.7px;font-weight:400;color:#505258;">victor.law</div>
<svg class="r" style="left:897.30px;top:413.00px;" width="12.5" height="12.5" viewBox="0 0 12.5 12.5"><defs><clipPath id="gc"><circle cx="6.25" cy="6.25" r="4.9"/></clipPath></defs><circle cx="6.25" cy="6.25" r="6.1" fill="#74777e"/><g clip-path="url(#gc)"><circle cx="6.25" cy="4.6" r="2.3" fill="#fff"/><ellipse cx="6.25" cy="11.2" rx="3.7" ry="3.6" fill="#fff"/></g></svg>
<div class="t" style="left:913.60px;top:414px;font-size:10.3px;line-height:10.3px;font-weight:400;color:#505258;">Johny Appleseed</div>
<div class="t" style="left:1016.50px;top:414px;font-size:9.8px;line-height:9.8px;font-weight:400;color:#505258;">View issue hi...</div>
<div class="t" style="left:203.00px;top:437px;width:38px;text-align:center;font-size:9.6px;line-height:9.6px;font-weight:700;color:#1f2a3c;letter-spacing:-0.3px;-webkit-text-stroke-width:0">7</div>
<svg class="r" style="left:252.00px;top:436.00px;" width="9" height="12" viewBox="0 0 9 12"><path d="M1.2 1 H7.8 V11 L4.5 8 L1.2 11Z" stroke="#6a9a23" stroke-width="1.15" fill="none" stroke-linejoin="round"/></svg>
<div class="t" style="left:358.00px;top:437px;font-size:10.3px;line-height:10.3px;font-weight:400;color:#2a63d9;">PLAT-33507</div>
<div class="t" style="left:448.70px;top:437px;font-size:10px;line-height:10px;font-weight:400;color:#505258;">Customer app...</div>
<div class="r" style="left:535.00px;top:435.40px;width:30.80px;height:12.60px;background:#a3d86a;border-radius:2px;border-top:1px solid #8ab85a"></div>
<div class="t" style="left:538.80px;top:439px;font-size:8.2px;line-height:8.2px;font-weight:700;color:#1c3a0c;">DONE</div>
<div class="t" style="left:627.90px;top:438px;font-size:9px;line-height:9px;font-weight:400;color:#505258;">5</div>
<div class="r" style="left:715.30px;top:435.20px;width:73.40px;height:12.40px;border:1px solid #c6c8cc;border-radius:2px"></div>
<div class="t" style="left:718.80px;top:438px;font-size:8.7px;line-height:8.7px;font-weight:700;color:#253452;">18/APR/25 9:...</div>
<div class="r" style="left:808.00px;top:436.00px;width:12.20px;height:12.20px;background:#ffab1f;border-radius:50%"></div>
<div class="r" style="left:811.30px;top:438.80px;width:5.60px;height:7.40px;background:#fde3cf;border-radius:45%"></div>
<div class="r" style="left:811.10px;top:438.00px;width:6.00px;height:2.60px;background:#3b2a20;border-radius:3px 3px 1px 1px"></div>
<div class="t" style="left:823.70px;top:437px;font-size:9.7px;line-height:9.7px;font-weight:400;color:#505258;">Ryan Lee</div>
<svg class="r" style="left:897.30px;top:436.00px;" width="12.5" height="12.5" viewBox="0 0 12.5 12.5"><defs><clipPath id="gc"><circle cx="6.25" cy="6.25" r="4.9"/></clipPath></defs><circle cx="6.25" cy="6.25" r="6.1" fill="#74777e"/><g clip-path="url(#gc)"><circle cx="6.25" cy="4.6" r="2.3" fill="#fff"/><ellipse cx="6.25" cy="11.2" rx="3.7" ry="3.6" fill="#fff"/></g></svg>
<div class="t" style="left:913.60px;top:437px;font-size:10.3px;line-height:10.3px;font-weight:400;color:#505258;">John Doe</div>
<div class="t" style="left:1016.50px;top:437px;font-size:9.8px;line-height:9.8px;font-weight:400;color:#505258;">View issue hi...</div>
<div class="t" style="left:203.00px;top:459px;width:38px;text-align:center;font-size:9.6px;line-height:9.6px;font-weight:700;color:#1f2a3c;letter-spacing:-0.3px;-webkit-text-stroke-width:0">8</div>
<svg class="r" style="left:252.00px;top:458.00px;" width="9" height="12" viewBox="0 0 9 12"><path d="M1.2 1 H7.8 V11 L4.5 8 L1.2 11Z" stroke="#6a9a23" stroke-width="1.15" fill="none" stroke-linejoin="round"/></svg>
<div class="t" style="left:358.00px;top:459px;font-size:10.3px;line-height:10.3px;font-weight:400;color:#2a63d9;">PLAT-33506</div>
<div class="t" style="left:448.70px;top:459px;font-size:10px;line-height:10px;font-weight:400;color:#505258;">Setup produc...</div>
<div class="r" style="left:535.00px;top:457.40px;width:63.70px;height:12.60px;background:#8fb8f6;border-radius:2px;border-top:1px solid #7c9fd8"></div>
<div class="t" style="left:538.80px;top:461px;font-size:8.2px;line-height:8.2px;font-weight:700;color:#0b2f66;">IN PROGRESS</div>
<div class="t" style="left:627.90px;top:460px;font-size:9px;line-height:9px;font-weight:400;color:#505258;">4</div>
<div class="r" style="left:715.30px;top:457.20px;width:73.40px;height:12.40px;border:1px solid #c6c8cc;border-radius:2px"></div>
<div class="t" style="left:718.80px;top:460px;font-size:8.7px;line-height:8.7px;font-weight:700;color:#253452;">18/APR/25 9:...</div>
<div class="r" style="left:808.00px;top:458.00px;width:12.20px;height:12.20px;background:radial-gradient(circle at 50% 45%,#c9cacc 0,#8d8f92 60%,#8e9194 100%);border-radius:50%;overflow:hidden"></div>
<div class="r" style="left:812.03px;top:459.71px;width:4.15px;height:2.44px;background:#3b2e27;border-radius:40% 40% 10% 10%"></div>
<div class="r" style="left:812.27px;top:461.29px;width:3.66px;height:5.12px;background:#b88a70;border-radius:40%"></div>
<div class="r" style="left:812.39px;top:462.64px;width:3.42px;height:0.73px;background:rgba(40,30,25,0.55)"></div>
<div class="r" style="left:810.93px;top:466.78px;width:6.34px;height:2.93px;background:#6d6a68;border-radius:45% 45% 30% 30%"></div>
<div class="t" style="left:823.70px;top:459px;font-size:9.7px;line-height:9.7px;font-weight:400;color:#505258;">victor.law</div>
<svg class="r" style="left:897.30px;top:458.00px;" width="12.5" height="12.5" viewBox="0 0 12.5 12.5"><defs><clipPath id="gc"><circle cx="6.25" cy="6.25" r="4.9"/></clipPath></defs><circle cx="6.25" cy="6.25" r="6.1" fill="#74777e"/><g clip-path="url(#gc)"><circle cx="6.25" cy="4.6" r="2.3" fill="#fff"/><ellipse cx="6.25" cy="11.2" rx="3.7" ry="3.6" fill="#fff"/></g></svg>
<div class="t" style="left:913.60px;top:459px;font-size:10.3px;line-height:10.3px;font-weight:400;color:#505258;">Duncan Idaho</div>
<div class="t" style="left:1016.50px;top:459px;font-size:9.8px;line-height:9.8px;font-weight:400;color:#505258;">View issue hi...</div>
<div class="t" style="left:203.00px;top:482px;width:38px;text-align:center;font-size:9.6px;line-height:9.6px;font-weight:700;color:#1f2a3c;letter-spacing:-0.3px;-webkit-text-stroke-width:0">9</div>
<svg class="r" style="left:252.00px;top:481.00px;" width="9" height="12" viewBox="0 0 9 12"><path d="M1.2 1 H7.8 V11 L4.5 8 L1.2 11Z" stroke="#6a9a23" stroke-width="1.15" fill="none" stroke-linejoin="round"/></svg>
<div class="t" style="left:358.00px;top:482px;font-size:10.3px;line-height:10.3px;font-weight:400;color:#2a63d9;">PLAT-33505</div>
<div class="t" style="left:448.70px;top:482px;font-size:10px;line-height:10px;font-weight:400;color:#505258;">Notifications ...</div>
<div class="r" style="left:535.00px;top:480.40px;width:30.80px;height:12.60px;background:#a3d86a;border-radius:2px;border-top:1px solid #8ab85a"></div>
<div class="t" style="left:538.80px;top:484px;font-size:8.2px;line-height:8.2px;font-weight:700;color:#1c3a0c;">DONE</div>
<div class="t" style="left:627.90px;top:483px;font-size:9px;line-height:9px;font-weight:400;color:#505258;">3</div>
<div class="r" style="left:715.30px;top:480.20px;width:73.40px;height:12.40px;border:1px solid #c6c8cc;border-radius:2px"></div>
<div class="t" style="left:718.80px;top:483px;font-size:8.7px;line-height:8.7px;font-weight:700;color:#253452;">18/APR/25 9:...</div>
<div class="r" style="left:808.00px;top:481.00px;width:12.20px;height:12.20px;background:#1f66e8;border-radius:50%"></div>
<div class="r" style="left:810.60px;top:482.80px;width:7.00px;height:8.50px;background:#172038;border-radius:50%"></div>
<div class="r" style="left:811.80px;top:485.20px;width:4.60px;height:6.00px;background:#f4d0b8;border-radius:45%"></div>
<div class="t" style="left:823.70px;top:482px;font-size:9.7px;line-height:9.7px;font-weight:400;color:#505258;">Alana Gra...</div>
<svg class="r" style="left:897.30px;top:481.00px;" width="12.5" height="12.5" viewBox="0 0 12.5 12.5"><defs><clipPath id="gc"><circle cx="6.25" cy="6.25" r="4.9"/></clipPath></defs><circle cx="6.25" cy="6.25" r="6.1" fill="#74777e"/><g clip-path="url(#gc)"><circle cx="6.25" cy="4.6" r="2.3" fill="#fff"/><ellipse cx="6.25" cy="11.2" rx="3.7" ry="3.6" fill="#fff"/></g></svg>
<div class="t" style="left:913.60px;top:482px;font-size:10.3px;line-height:10.3px;font-weight:400;color:#505258;">Duncan Idaho</div>
<div class="t" style="left:1016.50px;top:482px;font-size:9.8px;line-height:9.8px;font-weight:400;color:#505258;">View issue hi...</div>
<div class="t" style="left:203.00px;top:504px;width:38px;text-align:center;font-size:9.6px;line-height:9.6px;font-weight:700;color:#1f2a3c;letter-spacing:-0.3px;-webkit-text-stroke-width:0">10</div>
<svg class="r" style="left:252.00px;top:503.00px;" width="9" height="12" viewBox="0 0 9 12"><path d="M1.2 1 H7.8 V11 L4.5 8 L1.2 11Z" stroke="#6a9a23" stroke-width="1.15" fill="none" stroke-linejoin="round"/></svg>
<div class="t" style="left:358.00px;top:504px;font-size:10.3px;line-height:10.3px;font-weight:400;color:#2a63d9;">PLAT-33504</div>
<div class="t" style="left:448.70px;top:504px;font-size:10px;line-height:10px;font-weight:400;color:#505258;">Salesforce se...</div>
<div class="r" style="left:535.00px;top:502.40px;width:30.80px;height:12.60px;background:#a3d86a;border-radius:2px;border-top:1px solid #8ab85a"></div>
<div class="t" style="left:538.80px;top:506px;font-size:8.2px;line-height:8.2px;font-weight:700;color:#1c3a0c;">DONE</div>
<div class="t" style="left:627.90px;top:505px;font-size:9px;line-height:9px;font-weight:400;color:#505258;">3</div>
<div class="r" style="left:715.30px;top:502.20px;width:73.40px;height:12.40px;border:1px solid #c6c8cc;border-radius:2px"></div>
<div class="t" style="left:718.80px;top:505px;font-size:8.7px;line-height:8.7px;font-weight:700;color:#253452;">17/APR/25 9:5...</div>
<div class="r" style="left:808.00px;top:503.00px;width:12.20px;height:12.20px;background:#1f66e8;border-radius:50%"></div>
<div class="r" style="left:810.60px;top:504.80px;width:7.00px;height:8.50px;background:#172038;border-radius:50%"></div>
<div class="r" style="left:811.80px;top:507.20px;width:4.60px;height:6.00px;background:#f4d0b8;border-radius:45%"></div>
<div class="t" style="left:823.70px;top:504px;font-size:9.7px;line-height:9.7px;font-weight:400;color:#505258;">Alana Gra...</div>
<div class="r" style="left:897.30px;top:503.00px;width:12.20px;height:12.20px;background:#f5841f;border-radius:50%"></div>
<svg class="r" style="left:901.80px;top:506.30px;" width="4" height="6" viewBox="0 0 4 6"><path d="M1 5.5 V1.5 H3 M0.5 3.2 H2.5" stroke="#7a3a05" stroke-width="0.9" fill="none"/></svg>
<div class="t" style="left:913.60px;top:504px;font-size:10.3px;line-height:10.3px;font-weight:400;color:#505258;">field-demo-bot</div>
<div class="t" style="left:1016.50px;top:504px;font-size:9.8px;line-height:9.8px;font-weight:400;color:#505258;">View issue hi...</div>
<div class="t" style="left:203.00px;top:527px;width:38px;text-align:center;font-size:9.6px;line-height:9.6px;font-weight:700;color:#1f2a3c;letter-spacing:-0.3px;-webkit-text-stroke-width:0">11</div>
<svg class="r" style="left:252.00px;top:526.00px;" width="9" height="12" viewBox="0 0 9 12"><path d="M1.2 1 H7.8 V11 L4.5 8 L1.2 11Z" stroke="#6a9a23" stroke-width="1.15" fill="none" stroke-linejoin="round"/></svg>
<div class="t" style="left:358.00px;top:527px;font-size:10.3px;line-height:10.3px;font-weight:400;color:#2a63d9;">PLAT-33503</div>
<div class="t" style="left:448.70px;top:527px;font-size:10px;line-height:10px;font-weight:400;color:#505258;">Commerce ap...</div>
<div class="r" style="left:535.00px;top:525.20px;width:33.80px;height:13.30px;background:#dddee1;border:1px solid #b9bec8;border-radius:2.5px"></div>
<div class="t" style="left:538.60px;top:528px;font-size:8.3px;line-height:8.3px;font-weight:700;color:#292a2e;">TO DO</div>
<div class="t" style="left:627.90px;top:528px;font-size:9px;line-height:9px;font-weight:400;color:#505258;">5</div>
<div class="r" style="left:715.30px;top:525.20px;width:73.40px;height:12.40px;border:1px solid #c6c8cc;border-radius:2px"></div>
<div class="t" style="left:718.80px;top:528px;font-size:8.7px;line-height:8.7px;font-weight:700;color:#253452;">17/APR/25 9:5...</div>
<div class="r" style="left:808.00px;top:526.00px;width:12.20px;height:12.20px;background:#8fdcb3;border-radius:50%"></div>
<div class="r" style="left:810.80px;top:528.00px;width:6.60px;height:7.00px;background:#2c2320;border-radius:50%"></div>
<div class="r" style="left:812.00px;top:530.50px;width:4.20px;height:6.50px;background:#8a5a3c;border-radius:45%"></div>
<div class="t" style="left:823.70px;top:527px;font-size:9.7px;line-height:9.7px;font-weight:400;color:#505258;">Jennifer E...</div>
<div class="r" style="left:897.30px;top:526.00px;width:12.20px;height:12.20px;background:#f5841f;border-radius:50%"></div>
<svg class="r" style="left:901.80px;top:529.30px;" width="4" height="6" viewBox="0 0 4 6"><path d="M1 5.5 V1.5 H3 M0.5 3.2 H2.5" stroke="#7a3a05" stroke-width="0.9" fill="none"/></svg>
<div class="t" style="left:913.60px;top:527px;font-size:10.3px;line-height:10.3px;font-weight:400;color:#505258;">field-demo-bot</div>
<div class="t" style="left:1016.50px;top:527px;font-size:9.8px;line-height:9.8px;font-weight:400;color:#505258;">View issue hi...</div>
<div class="t" style="left:203.00px;top:549px;width:38px;text-align:center;font-size:9.6px;line-height:9.6px;font-weight:700;color:#1f2a3c;letter-spacing:-0.3px;-webkit-text-stroke-width:0">12</div>
<svg class="r" style="left:252.00px;top:548.00px;" width="9" height="12" viewBox="0 0 9 12"><path d="M1.2 1 H7.8 V11 L4.5 8 L1.2 11Z" stroke="#6a9a23" stroke-width="1.15" fill="none" stroke-linejoin="round"/></svg>
<div class="t" style="left:358.00px;top:549px;font-size:10.3px;line-height:10.3px;font-weight:400;color:#2a63d9;">PLAT-33502</div>
<div class="t" style="left:448.70px;top:549px;font-size:10px;line-height:10px;font-weight:400;color:#505258;">Customer app...</div>
<div class="r" style="left:535.00px;top:547.20px;width:33.80px;height:13.30px;background:#dddee1;border:1px solid #b9bec8;border-radius:2.5px"></div>
<div class="t" style="left:538.60px;top:550px;font-size:8.3px;line-height:8.3px;font-weight:700;color:#292a2e;">TO DO</div>
<div class="t" style="left:627.90px;top:550px;font-size:9px;line-height:9px;font-weight:400;color:#505258;">5</div>
<div class="r" style="left:715.30px;top:547.20px;width:73.40px;height:12.40px;border:1px solid #c6c8cc;border-radius:2px"></div>
<div class="t" style="left:718.80px;top:550px;font-size:8.7px;line-height:8.7px;font-weight:700;color:#253452;">17/APR/25 9:5...</div>
<div class="r" style="left:808.00px;top:548.00px;width:12.20px;height:12.20px;background:#1f66e8;border-radius:50%"></div>
<div class="r" style="left:810.60px;top:549.80px;width:7.00px;height:8.50px;background:#172038;border-radius:50%"></div>
<div class="r" style="left:811.80px;top:552.20px;width:4.60px;height:6.00px;background:#f4d0b8;border-radius:45%"></div>
<div class="t" style="left:823.70px;top:549px;font-size:9.7px;line-height:9.7px;font-weight:400;color:#505258;">Alana Gra...</div>
<div class="r" style="left:897.30px;top:548.00px;width:12.20px;height:12.20px;background:#f5841f;border-radius:50%"></div>
<svg class="r" style="left:901.80px;top:551.30px;" width="4" height="6" viewBox="0 0 4 6"><path d="M1 5.5 V1.5 H3 M0.5 3.2 H2.5" stroke="#7a3a05" stroke-width="0.9" fill="none"/></svg>
<div class="t" style="left:913.60px;top:549px;font-size:10.3px;line-height:10.3px;font-weight:400;color:#505258;">field-demo-bot</div>
<div class="t" style="left:1016.50px;top:549px;font-size:9.8px;line-height:9.8px;font-weight:400;color:#505258;">View issue hi...</div>
<div class="t" style="left:203.00px;top:572px;width:38px;text-align:center;font-size:9.6px;line-height:9.6px;font-weight:700;color:#1f2a3c;letter-spacing:-0.3px;-webkit-text-stroke-width:0">13</div>
<svg class="r" style="left:252.00px;top:571.00px;" width="9" height="12" viewBox="0 0 9 12"><path d="M1.2 1 H7.8 V11 L4.5 8 L1.2 11Z" stroke="#6a9a23" stroke-width="1.15" fill="none" stroke-linejoin="round"/></svg>
<div class="t" style="left:358.00px;top:572px;font-size:10.3px;line-height:10.3px;font-weight:400;color:#2a63d9;">PLAT-33501</div>
<div class="t" style="left:448.70px;top:572px;font-size:10px;line-height:10px;font-weight:400;color:#505258;">Setup produc...</div>
<div class="r" style="left:535.00px;top:570.20px;width:33.80px;height:13.30px;background:#dddee1;border:1px solid #b9bec8;border-radius:2.5px"></div>
<div class="t" style="left:538.60px;top:573px;font-size:8.3px;line-height:8.3px;font-weight:700;color:#292a2e;">TO DO</div>
<div class="t" style="left:627.90px;top:573px;font-size:9px;line-height:9px;font-weight:400;color:#505258;">4</div>
<div class="r" style="left:715.30px;top:570.20px;width:73.40px;height:12.40px;border:1px solid #c6c8cc;border-radius:2px"></div>
<div class="t" style="left:718.80px;top:573px;font-size:8.7px;line-height:8.7px;font-weight:700;color:#253452;">17/APR/25 9:5...</div>
<div class="r" style="left:808.00px;top:571.00px;width:12.20px;height:12.20px;background:#8a7fe0;border-radius:50%"></div>
<div class="r" style="left:811.30px;top:573.80px;width:5.60px;height:7.60px;background:#e8c2a8;border-radius:45%"></div>
<div class="r" style="left:811.10px;top:573.00px;width:6.00px;height:2.60px;background:#4b4b55;border-radius:3px 3px 1px 1px"></div>
<div class="t" style="left:823.70px;top:572px;font-size:9.7px;line-height:9.7px;font-weight:400;color:#505258;">Mitch Dav...</div>
<div class="r" style="left:897.30px;top:571.00px;width:12.20px;height:12.20px;background:#f5841f;border-radius:50%"></div>
<svg class="r" style="left:901.80px;top:574.30px;" width="4" height="6" viewBox="0 0 4 6"><path d="M1 5.5 V1.5 H3 M0.5 3.2 H2.5" stroke="#7a3a05" stroke-width="0.9" fill="none"/></svg>
<div class="t" style="left:913.60px;top:572px;font-size:10.3px;line-height:10.3px;font-weight:400;color:#505258;">field-demo-bot</div>
<div class="t" style="left:1016.50px;top:572px;font-size:9.8px;line-height:9.8px;font-weight:400;color:#505258;">View issue hi...</div>
<div class="t" style="left:203.00px;top:594px;width:38px;text-align:center;font-size:9.6px;line-height:9.6px;font-weight:700;color:#1f2a3c;letter-spacing:-0.3px;-webkit-text-stroke-width:0">14</div>
<svg class="r" style="left:252.00px;top:593.00px;" width="9" height="12" viewBox="0 0 9 12"><path d="M1.2 1 H7.8 V11 L4.5 8 L1.2 11Z" stroke="#6a9a23" stroke-width="1.15" fill="none" stroke-linejoin="round"/></svg>
<div class="t" style="left:358.00px;top:594px;font-size:10.3px;line-height:10.3px;font-weight:400;color:#2a63d9;">PLAT-33500</div>
<div class="t" style="left:448.70px;top:594px;font-size:10px;line-height:10px;font-weight:400;color:#505258;">Notifications ...</div>
<div class="r" style="left:535.00px;top:592.20px;width:33.80px;height:13.30px;background:#dddee1;border:1px solid #b9bec8;border-radius:2.5px"></div>
<div class="t" style="left:538.60px;top:595px;font-size:8.3px;line-height:8.3px;font-weight:700;color:#292a2e;">TO DO</div>
<div class="t" style="left:627.90px;top:595px;font-size:9px;line-height:9px;font-weight:400;color:#505258;">3</div>
<div class="r" style="left:715.30px;top:592.20px;width:73.40px;height:12.40px;border:1px solid #c6c8cc;border-radius:2px"></div>
<div class="t" style="left:718.80px;top:595px;font-size:8.7px;line-height:8.7px;font-weight:700;color:#253452;">17/APR/25 9:5...</div>
<div class="r" style="left:808.00px;top:593.00px;width:12.20px;height:12.20px;background:#1f66e8;border-radius:50%"></div>
<div class="r" style="left:810.60px;top:594.80px;width:7.00px;height:8.50px;background:#172038;border-radius:50%"></div>
<div class="r" style="left:811.80px;top:597.20px;width:4.60px;height:6.00px;background:#f4d0b8;border-radius:45%"></div>
<div class="t" style="left:823.70px;top:594px;font-size:9.7px;line-height:9.7px;font-weight:400;color:#505258;">Alana Gra...</div>
<div class="r" style="left:897.30px;top:593.00px;width:12.20px;height:12.20px;background:#f5841f;border-radius:50%"></div>
<svg class="r" style="left:901.80px;top:596.30px;" width="4" height="6" viewBox="0 0 4 6"><path d="M1 5.5 V1.5 H3 M0.5 3.2 H2.5" stroke="#7a3a05" stroke-width="0.9" fill="none"/></svg>
<div class="t" style="left:913.60px;top:594px;font-size:10.3px;line-height:10.3px;font-weight:400;color:#505258;">field-demo-bot</div>
<div class="t" style="left:1016.50px;top:594px;font-size:9.8px;line-height:9.8px;font-weight:400;color:#505258;">View issue hi...</div>
<div class="t" style="left:203.00px;top:617px;width:38px;text-align:center;font-size:9.6px;line-height:9.6px;font-weight:700;color:#1f2a3c;letter-spacing:-0.3px;-webkit-text-stroke-width:0">15</div>
<svg class="r" style="left:252.00px;top:616.00px;" width="9" height="12" viewBox="0 0 9 12"><path d="M1.2 1 H7.8 V11 L4.5 8 L1.2 11Z" stroke="#6a9a23" stroke-width="1.15" fill="none" stroke-linejoin="round"/></svg>
<div class="t" style="left:358.00px;top:617px;font-size:10.3px;line-height:10.3px;font-weight:400;color:#2a63d9;">PLAT-33499</div>
<div class="t" style="left:448.70px;top:617px;font-size:10px;line-height:10px;font-weight:400;color:#505258;">Salesforce se...</div>
<div class="r" style="left:535.00px;top:615.20px;width:33.80px;height:13.30px;background:#dddee1;border:1px solid #b9bec8;border-radius:2.5px"></div>
<div class="t" style="left:538.60px;top:618px;font-size:8.3px;line-height:8.3px;font-weight:700;color:#292a2e;">TO DO</div>
<div class="t" style="left:627.90px;top:618px;font-size:9px;line-height:9px;font-weight:400;color:#505258;">3</div>
<div class="r" style="left:715.30px;top:615.20px;width:73.40px;height:12.40px;border:1px solid #c6c8cc;border-radius:2px"></div>
<div class="t" style="left:718.80px;top:618px;font-size:8.7px;line-height:8.7px;font-weight:700;color:#253452;">16/APR/25 9:...</div>
<div class="r" style="left:808.00px;top:616.00px;width:12.20px;height:12.20px;background:#1f66e8;border-radius:50%"></div>
<div class="r" style="left:810.60px;top:617.80px;width:7.00px;height:8.50px;background:#172038;border-radius:50%"></div>
<div class="r" style="left:811.80px;top:620.20px;width:4.60px;height:6.00px;background:#f4d0b8;border-radius:45%"></div>
<div class="t" style="left:823.70px;top:617px;font-size:9.7px;line-height:9.7px;font-weight:400;color:#505258;">Alana Gra...</div>
<div class="r" style="left:897.30px;top:616.00px;width:12.20px;height:12.20px;background:#f5841f;border-radius:50%"></div>
<svg class="r" style="left:901.80px;top:619.30px;" width="4" height="6" viewBox="0 0 4 6"><path d="M1 5.5 V1.5 H3 M0.5 3.2 H2.5" stroke="#7a3a05" stroke-width="0.9" fill="none"/></svg>
<div class="t" style="left:913.60px;top:617px;font-size:10.3px;line-height:10.3px;font-weight:400;color:#505258;">field-demo-bot</div>
<div class="t" style="left:1016.50px;top:617px;font-size:9.8px;line-height:9.8px;font-weight:400;color:#505258;">View issue hi...</div>
<div class="t" style="left:203.00px;top:639px;width:38px;text-align:center;font-size:9.6px;line-height:9.6px;font-weight:700;color:#1f2a3c;letter-spacing:-0.3px;-webkit-text-stroke-width:0">16</div>
<svg class="r" style="left:252.00px;top:638.00px;" width="9" height="12" viewBox="0 0 9 12"><path d="M1.2 1 H7.8 V11 L4.5 8 L1.2 11Z" stroke="#6a9a23" stroke-width="1.15" fill="none" stroke-linejoin="round"/></svg>
<div class="t" style="left:358.00px;top:639px;font-size:10.3px;line-height:10.3px;font-weight:400;color:#2a63d9;">PLAT-33498</div>
<div class="t" style="left:448.70px;top:639px;font-size:10px;line-height:10px;font-weight:400;color:#505258;">Commerce ap...</div>
<div class="r" style="left:535.00px;top:637.20px;width:33.80px;height:13.30px;background:#dddee1;border:1px solid #b9bec8;border-radius:2.5px"></div>
<div class="t" style="left:538.60px;top:640px;font-size:8.3px;line-height:8.3px;font-weight:700;color:#292a2e;">TO DO</div>
<div class="t" style="left:627.90px;top:640px;font-size:9px;line-height:9px;font-weight:400;color:#505258;">5</div>
<div class="r" style="left:715.30px;top:637.20px;width:73.40px;height:12.40px;border:1px solid #c6c8cc;border-radius:2px"></div>
<div class="t" style="left:718.80px;top:640px;font-size:8.7px;line-height:8.7px;font-weight:700;color:#253452;">16/APR/25 9:...</div>
<div class="r" style="left:808.00px;top:638.00px;width:12.20px;height:12.20px;background:#8fdcb3;border-radius:50%"></div>
<div class="r" style="left:810.80px;top:640.00px;width:6.60px;height:7.00px;background:#2c2320;border-radius:50%"></div>
<div class="r" style="left:812.00px;top:642.50px;width:4.20px;height:6.50px;background:#8a5a3c;border-radius:45%"></div>
<div class="t" style="left:823.70px;top:639px;font-size:9.7px;line-height:9.7px;font-weight:400;color:#505258;">Jennifer E...</div>
<div class="r" style="left:897.30px;top:638.00px;width:12.20px;height:12.20px;background:#f5841f;border-radius:50%"></div>
<svg class="r" style="left:901.80px;top:641.30px;" width="4" height="6" viewBox="0 0 4 6"><path d="M1 5.5 V1.5 H3 M0.5 3.2 H2.5" stroke="#7a3a05" stroke-width="0.9" fill="none"/></svg>
<div class="t" style="left:913.60px;top:639px;font-size:10.3px;line-height:10.3px;font-weight:400;color:#505258;">field-demo-bot</div>
<div class="t" style="left:1016.50px;top:639px;font-size:9.8px;line-height:9.8px;font-weight:400;color:#505258;">View issue hi...</div>
<div class="t" style="left:203.00px;top:662px;width:38px;text-align:center;font-size:9.6px;line-height:9.6px;font-weight:700;color:#1f2a3c;letter-spacing:-0.3px;-webkit-text-stroke-width:0">17</div>
<svg class="r" style="left:252.00px;top:661.00px;" width="9" height="12" viewBox="0 0 9 12"><path d="M1.2 1 H7.8 V11 L4.5 8 L1.2 11Z" stroke="#6a9a23" stroke-width="1.15" fill="none" stroke-linejoin="round"/></svg>
<div class="t" style="left:358.00px;top:662px;font-size:10.3px;line-height:10.3px;font-weight:400;color:#2a63d9;">PLAT-33497</div>
<div class="t" style="left:448.70px;top:662px;font-size:10px;line-height:10px;font-weight:400;color:#505258;">Customer app...</div>
<div class="r" style="left:535.00px;top:660.20px;width:33.80px;height:13.30px;background:#dddee1;border:1px solid #b9bec8;border-radius:2.5px"></div>
<div class="t" style="left:538.60px;top:663px;font-size:8.3px;line-height:8.3px;font-weight:700;color:#292a2e;">TO DO</div>
<div class="t" style="left:627.90px;top:663px;font-size:9px;line-height:9px;font-weight:400;color:#505258;">5</div>
<div class="r" style="left:715.30px;top:660.20px;width:73.40px;height:12.40px;border:1px solid #c6c8cc;border-radius:2px"></div>
<div class="t" style="left:718.80px;top:663px;font-size:8.7px;line-height:8.7px;font-weight:700;color:#253452;">16/APR/25 9:...</div>
<div class="r" style="left:808.00px;top:661.00px;width:12.20px;height:12.20px;background:#1f66e8;border-radius:50%"></div>
<div class="r" style="left:810.60px;top:662.80px;width:7.00px;height:8.50px;background:#172038;border-radius:50%"></div>
<div class="r" style="left:811.80px;top:665.20px;width:4.60px;height:6.00px;background:#f4d0b8;border-radius:45%"></div>
<div class="t" style="left:823.70px;top:662px;font-size:9.7px;line-height:9.7px;font-weight:400;color:#505258;">Alana Gra...</div>
<div class="r" style="left:897.30px;top:661.00px;width:12.20px;height:12.20px;background:#f5841f;border-radius:50%"></div>
<svg class="r" style="left:901.80px;top:664.30px;" width="4" height="6" viewBox="0 0 4 6"><path d="M1 5.5 V1.5 H3 M0.5 3.2 H2.5" stroke="#7a3a05" stroke-width="0.9" fill="none"/></svg>
<div class="t" style="left:913.60px;top:662px;font-size:10.3px;line-height:10.3px;font-weight:400;color:#505258;">field-demo-bot</div>
<div class="t" style="left:1016.50px;top:662px;font-size:9.8px;line-height:9.8px;font-weight:400;color:#505258;">View issue hi...</div>
<div class="t" style="left:203.00px;top:684px;width:38px;text-align:center;font-size:9.6px;line-height:9.6px;font-weight:700;color:#1f2a3c;letter-spacing:-0.3px;-webkit-text-stroke-width:0">18</div>
<svg class="r" style="left:252.00px;top:683.00px;" width="9" height="12" viewBox="0 0 9 12"><path d="M1.2 1 H7.8 V11 L4.5 8 L1.2 11Z" stroke="#6a9a23" stroke-width="1.15" fill="none" stroke-linejoin="round"/></svg>
<div class="t" style="left:358.00px;top:684px;font-size:10.3px;line-height:10.3px;font-weight:400;color:#2a63d9;">PLAT-33496</div>
<div class="t" style="left:448.70px;top:684px;font-size:10px;line-height:10px;font-weight:400;color:#505258;">Setup produc...</div>
<div class="r" style="left:535.00px;top:682.20px;width:33.80px;height:13.30px;background:#dddee1;border:1px solid #b9bec8;border-radius:2.5px"></div>
<div class="t" style="left:538.60px;top:685px;font-size:8.3px;line-height:8.3px;font-weight:700;color:#292a2e;">TO DO</div>
<div class="t" style="left:627.90px;top:685px;font-size:9px;line-height:9px;font-weight:400;color:#505258;">4</div>
<div class="r" style="left:715.30px;top:682.20px;width:73.40px;height:12.40px;border:1px solid #c6c8cc;border-radius:2px"></div>
<div class="t" style="left:718.80px;top:685px;font-size:8.7px;line-height:8.7px;font-weight:700;color:#253452;">16/APR/25 9:...</div>
<div class="r" style="left:808.00px;top:683.00px;width:12.20px;height:12.20px;background:#8a7fe0;border-radius:50%"></div>
<div class="r" style="left:811.30px;top:685.80px;width:5.60px;height:7.60px;background:#e8c2a8;border-radius:45%"></div>
<div class="r" style="left:811.10px;top:685.00px;width:6.00px;height:2.60px;background:#4b4b55;border-radius:3px 3px 1px 1px"></div>
<div class="t" style="left:823.70px;top:684px;font-size:9.7px;line-height:9.7px;font-weight:400;color:#505258;">Mitch Dav...</div>
<div class="r" style="left:897.30px;top:683.00px;width:12.20px;height:12.20px;background:#f5841f;border-radius:50%"></div>
<svg class="r" style="left:901.80px;top:686.30px;" width="4" height="6" viewBox="0 0 4 6"><path d="M1 5.5 V1.5 H3 M0.5 3.2 H2.5" stroke="#7a3a05" stroke-width="0.9" fill="none"/></svg>
<div class="t" style="left:913.60px;top:684px;font-size:10.3px;line-height:10.3px;font-weight:400;color:#505258;">field-demo-bot</div>
<div class="t" style="left:1016.50px;top:684px;font-size:9.8px;line-height:9.8px;font-weight:400;color:#505258;">View issue hi...</div>
<div class="t" style="left:203.00px;top:707px;width:38px;text-align:center;font-size:9.6px;line-height:9.6px;font-weight:700;color:#1f2a3c;letter-spacing:-0.3px;-webkit-text-stroke-width:0">19</div>
<svg class="r" style="left:252.00px;top:706.00px;" width="9" height="12" viewBox="0 0 9 12"><path d="M1.2 1 H7.8 V11 L4.5 8 L1.2 11Z" stroke="#6a9a23" stroke-width="1.15" fill="none" stroke-linejoin="round"/></svg>
<div class="t" style="left:358.00px;top:707px;font-size:10.3px;line-height:10.3px;font-weight:400;color:#2a63d9;">PLAT-33495</div>
<div class="t" style="left:448.70px;top:707px;font-size:10px;line-height:10px;font-weight:400;color:#505258;">Notifications ...</div>
<div class="r" style="left:535.00px;top:705.20px;width:33.80px;height:13.30px;background:#dddee1;border:1px solid #b9bec8;border-radius:2.5px"></div>
<div class="t" style="left:538.60px;top:708px;font-size:8.3px;line-height:8.3px;font-weight:700;color:#292a2e;">TO DO</div>
<div class="t" style="left:627.90px;top:708px;font-size:9px;line-height:9px;font-weight:400;color:#505258;">3</div>
<div class="r" style="left:715.30px;top:705.20px;width:73.40px;height:12.40px;border:1px solid #c6c8cc;border-radius:2px"></div>
<div class="t" style="left:718.80px;top:708px;font-size:8.7px;line-height:8.7px;font-weight:700;color:#253452;">16/APR/25 9:...</div>
<div class="r" style="left:808.00px;top:706.00px;width:12.20px;height:12.20px;background:#1f66e8;border-radius:50%"></div>
<div class="r" style="left:810.60px;top:707.80px;width:7.00px;height:8.50px;background:#172038;border-radius:50%"></div>
<div class="r" style="left:811.80px;top:710.20px;width:4.60px;height:6.00px;background:#f4d0b8;border-radius:45%"></div>
<div class="t" style="left:823.70px;top:707px;font-size:9.7px;line-height:9.7px;font-weight:400;color:#505258;">Alana Gra...</div>
<div class="r" style="left:897.30px;top:706.00px;width:12.20px;height:12.20px;background:#f5841f;border-radius:50%"></div>
<svg class="r" style="left:901.80px;top:709.30px;" width="4" height="6" viewBox="0 0 4 6"><path d="M1 5.5 V1.5 H3 M0.5 3.2 H2.5" stroke="#7a3a05" stroke-width="0.9" fill="none"/></svg>
<div class="t" style="left:913.60px;top:707px;font-size:10.3px;line-height:10.3px;font-weight:400;color:#505258;">field-demo-bot</div>
<div class="t" style="left:1016.50px;top:707px;font-size:9.8px;line-height:9.8px;font-weight:400;color:#505258;">View issue hi...</div>
<div class="t" style="left:203.00px;top:729px;width:38px;text-align:center;font-size:9.6px;line-height:9.6px;font-weight:700;color:#1f2a3c;letter-spacing:-0.3px;-webkit-text-stroke-width:0">20</div>
<svg class="r" style="left:252.00px;top:728.00px;" width="9" height="12" viewBox="0 0 9 12"><path d="M1.2 1 H7.8 V11 L4.5 8 L1.2 11Z" stroke="#6a9a23" stroke-width="1.15" fill="none" stroke-linejoin="round"/></svg>
<div class="t" style="left:358.00px;top:729px;font-size:10.3px;line-height:10.3px;font-weight:400;color:#2a63d9;">PLAT-33494</div>
<div class="t" style="left:448.70px;top:729px;font-size:10px;line-height:10px;font-weight:400;color:#505258;">Salesforce se...</div>
<div class="r" style="left:535.00px;top:727.20px;width:33.80px;height:13.30px;background:#dddee1;border:1px solid #b9bec8;border-radius:2.5px"></div>
<div class="t" style="left:538.60px;top:730px;font-size:8.3px;line-height:8.3px;font-weight:700;color:#292a2e;">TO DO</div>
<div class="t" style="left:627.90px;top:730px;font-size:9px;line-height:9px;font-weight:400;color:#505258;">3</div>
<div class="r" style="left:715.30px;top:727.20px;width:73.40px;height:12.40px;border:1px solid #c6c8cc;border-radius:2px"></div>
<div class="t" style="left:718.80px;top:730px;font-size:8.7px;line-height:8.7px;font-weight:700;color:#253452;">15/APR/25 9:...</div>
<div class="r" style="left:808.00px;top:728.00px;width:12.20px;height:12.20px;background:#1f66e8;border-radius:50%"></div>
<div class="r" style="left:810.60px;top:729.80px;width:7.00px;height:8.50px;background:#172038;border-radius:50%"></div>
<div class="r" style="left:811.80px;top:732.20px;width:4.60px;height:6.00px;background:#f4d0b8;border-radius:45%"></div>
<div class="t" style="left:823.70px;top:729px;font-size:9.7px;line-height:9.7px;font-weight:400;color:#505258;">Alana Gra...</div>
<div class="r" style="left:897.30px;top:728.00px;width:12.20px;height:12.20px;background:#f5841f;border-radius:50%"></div>
<svg class="r" style="left:901.80px;top:731.30px;" width="4" height="6" viewBox="0 0 4 6"><path d="M1 5.5 V1.5 H3 M0.5 3.2 H2.5" stroke="#7a3a05" stroke-width="0.9" fill="none"/></svg>
<div class="t" style="left:913.60px;top:729px;font-size:10.3px;line-height:10.3px;font-weight:400;color:#505258;">field-demo-bot</div>
<div class="t" style="left:1016.50px;top:729px;font-size:9.8px;line-height:9.8px;font-weight:400;color:#505258;">View issue hi...</div>
<div class="t" style="left:203.00px;top:752px;width:38px;text-align:center;font-size:9.6px;line-height:9.6px;font-weight:700;color:#1f2a3c;letter-spacing:-0.3px;-webkit-text-stroke-width:0">21</div>
<svg class="r" style="left:252.00px;top:751.00px;" width="9" height="12" viewBox="0 0 9 12"><path d="M1.2 1 H7.8 V11 L4.5 8 L1.2 11Z" stroke="#6a9a23" stroke-width="1.15" fill="none" stroke-linejoin="round"/></svg>
<div class="t" style="left:358.00px;top:752px;font-size:10.3px;line-height:10.3px;font-weight:400;color:#2a63d9;">PLAT-33493</div>
<div class="t" style="left:448.70px;top:752px;font-size:10px;line-height:10px;font-weight:400;color:#505258;">Commerce ap...</div>
<div class="r" style="left:535.00px;top:750.20px;width:33.80px;height:13.30px;background:#dddee1;border:1px solid #b9bec8;border-radius:2.5px"></div>
<div class="t" style="left:538.60px;top:753px;font-size:8.3px;line-height:8.3px;font-weight:700;color:#292a2e;">TO DO</div>
<div class="t" style="left:627.90px;top:753px;font-size:9px;line-height:9px;font-weight:400;color:#505258;">5</div>
<div class="r" style="left:715.30px;top:750.20px;width:73.40px;height:12.40px;border:1px solid #c6c8cc;border-radius:2px"></div>
<div class="t" style="left:718.80px;top:753px;font-size:8.7px;line-height:8.7px;font-weight:700;color:#253452;">15/APR/25 9:...</div>
<div class="r" style="left:808.00px;top:751.00px;width:12.20px;height:12.20px;background:#8fdcb3;border-radius:50%"></div>
<div class="r" style="left:810.80px;top:753.00px;width:6.60px;height:7.00px;background:#2c2320;border-radius:50%"></div>
<div class="r" style="left:812.00px;top:755.50px;width:4.20px;height:6.50px;background:#8a5a3c;border-radius:45%"></div>
<div class="t" style="left:823.70px;top:752px;font-size:9.7px;line-height:9.7px;font-weight:400;color:#505258;">Jennifer E...</div>
<div class="r" style="left:897.30px;top:751.00px;width:12.20px;height:12.20px;background:#f5841f;border-radius:50%"></div>
<svg class="r" style="left:901.80px;top:754.30px;" width="4" height="6" viewBox="0 0 4 6"><path d="M1 5.5 V1.5 H3 M0.5 3.2 H2.5" stroke="#7a3a05" stroke-width="0.9" fill="none"/></svg>
<div class="t" style="left:913.60px;top:752px;font-size:10.3px;line-height:10.3px;font-weight:400;color:#505258;">field-demo-bot</div>
<div class="t" style="left:1016.50px;top:752px;font-size:9.8px;line-height:9.8px;font-weight:400;color:#505258;">View issue hi...</div>
<div class="t" style="left:203.00px;top:774px;width:38px;text-align:center;font-size:9.6px;line-height:9.6px;font-weight:700;color:#1f2a3c;letter-spacing:-0.3px;-webkit-text-stroke-width:0">22</div>
<svg class="r" style="left:252.00px;top:773.00px;" width="9" height="12" viewBox="0 0 9 12"><path d="M1.2 1 H7.8 V11 L4.5 8 L1.2 11Z" stroke="#6a9a23" stroke-width="1.15" fill="none" stroke-linejoin="round"/></svg>
<div class="t" style="left:358.00px;top:774px;font-size:10.3px;line-height:10.3px;font-weight:400;color:#2a63d9;">PLAT-33492</div>
<div class="t" style="left:448.70px;top:774px;font-size:10px;line-height:10px;font-weight:400;color:#505258;">Customer app...</div>
<div class="r" style="left:535.00px;top:772.20px;width:33.80px;height:13.30px;background:#dddee1;border:1px solid #b9bec8;border-radius:2.5px"></div>
<div class="t" style="left:538.60px;top:775px;font-size:8.3px;line-height:8.3px;font-weight:700;color:#292a2e;">TO DO</div>
<div class="t" style="left:627.90px;top:775px;font-size:9px;line-height:9px;font-weight:400;color:#505258;">5</div>
<div class="r" style="left:715.30px;top:772.20px;width:73.40px;height:12.40px;border:1px solid #c6c8cc;border-radius:2px"></div>
<div class="t" style="left:718.80px;top:775px;font-size:8.7px;line-height:8.7px;font-weight:700;color:#253452;">15/APR/25 9:...</div>
<div class="r" style="left:808.00px;top:773.00px;width:12.20px;height:12.20px;background:#1f66e8;border-radius:50%"></div>
<div class="r" style="left:810.60px;top:774.80px;width:7.00px;height:8.50px;background:#172038;border-radius:50%"></div>
<div class="r" style="left:811.80px;top:777.20px;width:4.60px;height:6.00px;background:#f4d0b8;border-radius:45%"></div>
<div class="t" style="left:823.70px;top:774px;font-size:9.7px;line-height:9.7px;font-weight:400;color:#505258;">Alana Gra...</div>
<div class="r" style="left:897.30px;top:773.00px;width:12.20px;height:12.20px;background:#f5841f;border-radius:50%"></div>
<svg class="r" style="left:901.80px;top:776.30px;" width="4" height="6" viewBox="0 0 4 6"><path d="M1 5.5 V1.5 H3 M0.5 3.2 H2.5" stroke="#7a3a05" stroke-width="0.9" fill="none"/></svg>
<div class="t" style="left:913.60px;top:774px;font-size:10.3px;line-height:10.3px;font-weight:400;color:#505258;">field-demo-bot</div>
<div class="t" style="left:1016.50px;top:774px;font-size:9.8px;line-height:9.8px;font-weight:400;color:#505258;">View issue hi...</div>
<div class="t" style="left:203.00px;top:797px;width:38px;text-align:center;font-size:9.6px;line-height:9.6px;font-weight:700;color:#1f2a3c;letter-spacing:-0.3px;-webkit-text-stroke-width:0">23</div>
<svg class="r" style="left:252.00px;top:796.00px;" width="9" height="12" viewBox="0 0 9 12"><path d="M1.2 1 H7.8 V11 L4.5 8 L1.2 11Z" stroke="#6a9a23" stroke-width="1.15" fill="none" stroke-linejoin="round"/></svg>
<div class="t" style="left:358.00px;top:797px;font-size:10.3px;line-height:10.3px;font-weight:400;color:#2a63d9;">PLAT-33491</div>
<div class="t" style="left:448.70px;top:797px;font-size:10px;line-height:10px;font-weight:400;color:#505258;">Setup produc...</div>
<div class="r" style="left:535.00px;top:795.20px;width:33.80px;height:13.30px;background:#dddee1;border:1px solid #b9bec8;border-radius:2.5px"></div>
<div class="t" style="left:538.60px;top:798px;font-size:8.3px;line-height:8.3px;font-weight:700;color:#292a2e;">TO DO</div>
<div class="t" style="left:627.90px;top:798px;font-size:9px;line-height:9px;font-weight:400;color:#505258;">4</div>
<div class="r" style="left:715.30px;top:795.20px;width:73.40px;height:12.40px;border:1px solid #c6c8cc;border-radius:2px"></div>
<div class="t" style="left:718.80px;top:798px;font-size:8.7px;line-height:8.7px;font-weight:700;color:#253452;">15/APR/25 9:...</div>
<div class="r" style="left:808.00px;top:796.00px;width:12.20px;height:12.20px;background:#8a7fe0;border-radius:50%"></div>
<div class="r" style="left:811.30px;top:798.80px;width:5.60px;height:7.60px;background:#e8c2a8;border-radius:45%"></div>
<div class="r" style="left:811.10px;top:798.00px;width:6.00px;height:2.60px;background:#4b4b55;border-radius:3px 3px 1px 1px"></div>
<div class="t" style="left:823.70px;top:797px;font-size:9.7px;line-height:9.7px;font-weight:400;color:#505258;">Mitch Dav...</div>
<div class="r" style="left:897.30px;top:796.00px;width:12.20px;height:12.20px;background:#f5841f;border-radius:50%"></div>
<svg class="r" style="left:901.80px;top:799.30px;" width="4" height="6" viewBox="0 0 4 6"><path d="M1 5.5 V1.5 H3 M0.5 3.2 H2.5" stroke="#7a3a05" stroke-width="0.9" fill="none"/></svg>
<div class="t" style="left:913.60px;top:797px;font-size:10.3px;line-height:10.3px;font-weight:400;color:#505258;">field-demo-bot</div>
<div class="t" style="left:1016.50px;top:797px;font-size:9.8px;line-height:9.8px;font-weight:400;color:#505258;">View issue hi...</div>
<div class="t" style="left:203.00px;top:819px;width:38px;text-align:center;font-size:9.6px;line-height:9.6px;font-weight:700;color:#1f2a3c;letter-spacing:-0.3px;-webkit-text-stroke-width:0">24</div>
<svg class="r" style="left:252.00px;top:818.00px;" width="9" height="12" viewBox="0 0 9 12"><path d="M1.2 1 H7.8 V11 L4.5 8 L1.2 11Z" stroke="#6a9a23" stroke-width="1.15" fill="none" stroke-linejoin="round"/></svg>
<div class="t" style="left:358.00px;top:819px;font-size:10.3px;line-height:10.3px;font-weight:400;color:#2a63d9;">PLAT-33490</div>
<div class="t" style="left:448.70px;top:819px;font-size:10px;line-height:10px;font-weight:400;color:#505258;">Notifications ...</div>
<div class="r" style="left:535.00px;top:817.20px;width:33.80px;height:13.30px;background:#dddee1;border:1px solid #b9bec8;border-radius:2.5px"></div>
<div class="t" style="left:538.60px;top:820px;font-size:8.3px;line-height:8.3px;font-weight:700;color:#292a2e;">TO DO</div>
<div class="t" style="left:627.90px;top:820px;font-size:9px;line-height:9px;font-weight:400;color:#505258;">3</div>
<div class="r" style="left:715.30px;top:817.20px;width:73.40px;height:12.40px;border:1px solid #c6c8cc;border-radius:2px"></div>
<div class="t" style="left:718.80px;top:820px;font-size:8.7px;line-height:8.7px;font-weight:700;color:#253452;">15/APR/25 9:...</div>
<div class="r" style="left:808.00px;top:818.00px;width:12.20px;height:12.20px;background:#1f66e8;border-radius:50%"></div>
<div class="r" style="left:810.60px;top:819.80px;width:7.00px;height:8.50px;background:#172038;border-radius:50%"></div>
<div class="r" style="left:811.80px;top:822.20px;width:4.60px;height:6.00px;background:#f4d0b8;border-radius:45%"></div>
<div class="t" style="left:823.70px;top:819px;font-size:9.7px;line-height:9.7px;font-weight:400;color:#505258;">Alana Gra...</div>
<div class="r" style="left:897.30px;top:818.00px;width:12.20px;height:12.20px;background:#f5841f;border-radius:50%"></div>
<svg class="r" style="left:901.80px;top:821.30px;" width="4" height="6" viewBox="0 0 4 6"><path d="M1 5.5 V1.5 H3 M0.5 3.2 H2.5" stroke="#7a3a05" stroke-width="0.9" fill="none"/></svg>
<div class="t" style="left:913.60px;top:819px;font-size:10.3px;line-height:10.3px;font-weight:400;color:#505258;">field-demo-bot</div>
<div class="t" style="left:1016.50px;top:819px;font-size:9.8px;line-height:9.8px;font-weight:400;color:#505258;">View issue hi...</div>
<div class="t" style="left:203.00px;top:842px;width:38px;text-align:center;font-size:9.6px;line-height:9.6px;font-weight:700;color:#1f2a3c;letter-spacing:-0.3px;-webkit-text-stroke-width:0">25</div>
<svg class="r" style="left:252.00px;top:841.00px;" width="9" height="12" viewBox="0 0 9 12"><path d="M1.2 1 H7.8 V11 L4.5 8 L1.2 11Z" stroke="#6a9a23" stroke-width="1.15" fill="none" stroke-linejoin="round"/></svg>
<div class="t" style="left:358.00px;top:842px;font-size:10.3px;line-height:10.3px;font-weight:400;color:#2a63d9;">PLAT-33489</div>
<div class="t" style="left:448.70px;top:842px;font-size:10px;line-height:10px;font-weight:400;color:#505258;">Salesforce se...</div>
<div class="r" style="left:535.00px;top:840.20px;width:33.80px;height:13.30px;background:#dddee1;border:1px solid #b9bec8;border-radius:2.5px"></div>
<div class="t" style="left:538.60px;top:843px;font-size:8.3px;line-height:8.3px;font-weight:700;color:#292a2e;">TO DO</div>
<div class="t" style="left:627.90px;top:843px;font-size:9px;line-height:9px;font-weight:400;color:#505258;">3</div>
<div class="r" style="left:715.30px;top:840.20px;width:73.40px;height:12.40px;border:1px solid #c6c8cc;border-radius:2px"></div>
<div class="t" style="left:718.80px;top:843px;font-size:8.7px;line-height:8.7px;font-weight:700;color:#253452;">14/APR/25 9:...</div>
<div class="r" style="left:808.00px;top:841.00px;width:12.20px;height:12.20px;background:#1f66e8;border-radius:50%"></div>
<div class="r" style="left:810.60px;top:842.80px;width:7.00px;height:8.50px;background:#172038;border-radius:50%"></div>
<div class="r" style="left:811.80px;top:845.20px;width:4.60px;height:6.00px;background:#f4d0b8;border-radius:45%"></div>
<div class="t" style="left:823.70px;top:842px;font-size:9.7px;line-height:9.7px;font-weight:400;color:#505258;">Alana Gra...</div>
<div class="r" style="left:897.30px;top:841.00px;width:12.20px;height:12.20px;background:#f5841f;border-radius:50%"></div>
<svg class="r" style="left:901.80px;top:844.30px;" width="4" height="6" viewBox="0 0 4 6"><path d="M1 5.5 V1.5 H3 M0.5 3.2 H2.5" stroke="#7a3a05" stroke-width="0.9" fill="none"/></svg>
<div class="t" style="left:913.60px;top:842px;font-size:10.3px;line-height:10.3px;font-weight:400;color:#505258;">field-demo-bot</div>
<div class="t" style="left:1016.50px;top:842px;font-size:9.8px;line-height:9.8px;font-weight:400;color:#505258;">View issue hi...</div>
<div class="t" style="left:203.00px;top:864px;width:38px;text-align:center;font-size:9.6px;line-height:9.6px;font-weight:700;color:#1f2a3c;letter-spacing:-0.3px;-webkit-text-stroke-width:0">26</div>
<svg class="r" style="left:252.00px;top:863.00px;" width="9" height="12" viewBox="0 0 9 12"><path d="M1.2 1 H7.8 V11 L4.5 8 L1.2 11Z" stroke="#6a9a23" stroke-width="1.15" fill="none" stroke-linejoin="round"/></svg>
<div class="t" style="left:358.00px;top:864px;font-size:10.3px;line-height:10.3px;font-weight:400;color:#2a63d9;">PLAT-33488</div>
<div class="t" style="left:448.70px;top:864px;font-size:10px;line-height:10px;font-weight:400;color:#505258;">Commerce ap...</div>
<div class="r" style="left:535.00px;top:862.20px;width:33.80px;height:13.30px;background:#dddee1;border:1px solid #b9bec8;border-radius:2.5px"></div>
<div class="t" style="left:538.60px;top:865px;font-size:8.3px;line-height:8.3px;font-weight:700;color:#292a2e;">TO DO</div>
<div class="t" style="left:627.90px;top:865px;font-size:9px;line-height:9px;font-weight:400;color:#505258;">5</div>
<div class="r" style="left:715.30px;top:862.20px;width:73.40px;height:12.40px;border:1px solid #c6c8cc;border-radius:2px"></div>
<div class="t" style="left:718.80px;top:865px;font-size:8.7px;line-height:8.7px;font-weight:700;color:#253452;">14/APR/25 9:...</div>
<div class="r" style="left:808.00px;top:863.00px;width:12.20px;height:12.20px;background:#8fdcb3;border-radius:50%"></div>
<div class="r" style="left:810.80px;top:865.00px;width:6.60px;height:7.00px;background:#2c2320;border-radius:50%"></div>
<div class="r" style="left:812.00px;top:867.50px;width:4.20px;height:6.50px;background:#8a5a3c;border-radius:45%"></div>
<div class="t" style="left:823.70px;top:864px;font-size:9.7px;line-height:9.7px;font-weight:400;color:#505258;">Jennifer E...</div>
<div class="r" style="left:897.30px;top:863.00px;width:12.20px;height:12.20px;background:#f5841f;border-radius:50%"></div>
<svg class="r" style="left:901.80px;top:866.30px;" width="4" height="6" viewBox="0 0 4 6"><path d="M1 5.5 V1.5 H3 M0.5 3.2 H2.5" stroke="#7a3a05" stroke-width="0.9" fill="none"/></svg>
<div class="t" style="left:913.60px;top:864px;font-size:10.3px;line-height:10.3px;font-weight:400;color:#505258;">field-demo-bot</div>
<div class="t" style="left:1016.50px;top:864px;font-size:9.8px;line-height:9.8px;font-weight:400;color:#505258;">View issue hi...</div>
<div class="t" style="left:203.00px;top:887px;width:38px;text-align:center;font-size:9.6px;line-height:9.6px;font-weight:700;color:#1f2a3c;letter-spacing:-0.3px;-webkit-text-stroke-width:0">27</div>
<svg class="r" style="left:252.00px;top:886.00px;" width="9" height="12" viewBox="0 0 9 12"><path d="M1.2 1 H7.8 V11 L4.5 8 L1.2 11Z" stroke="#6a9a23" stroke-width="1.15" fill="none" stroke-linejoin="round"/></svg>
<div class="t" style="left:358.00px;top:887px;font-size:10.3px;line-height:10.3px;font-weight:400;color:#2a63d9;">PLAT-33487</div>
<div class="t" style="left:448.70px;top:887px;font-size:10px;line-height:10px;font-weight:400;color:#505258;">Customer app...</div>
<div class="r" style="left:535.00px;top:885.20px;width:33.80px;height:13.30px;background:#dddee1;border:1px solid #b9bec8;border-radius:2.5px"></div>
<div class="t" style="left:538.60px;top:888px;font-size:8.3px;line-height:8.3px;font-weight:700;color:#292a2e;">TO DO</div>
<div class="t" style="left:627.90px;top:888px;font-size:9px;line-height:9px;font-weight:400;color:#505258;">5</div>
<div class="r" style="left:715.30px;top:885.20px;width:73.40px;height:12.40px;border:1px solid #c6c8cc;border-radius:2px"></div>
<div class="t" style="left:718.80px;top:888px;font-size:8.7px;line-height:8.7px;font-weight:700;color:#253452;">14/APR/25 9:...</div>
<div class="r" style="left:808.00px;top:886.00px;width:12.20px;height:12.20px;background:#1f66e8;border-radius:50%"></div>
<div class="r" style="left:810.60px;top:887.80px;width:7.00px;height:8.50px;background:#172038;border-radius:50%"></div>
<div class="r" style="left:811.80px;top:890.20px;width:4.60px;height:6.00px;background:#f4d0b8;border-radius:45%"></div>
<div class="t" style="left:823.70px;top:887px;font-size:9.7px;line-height:9.7px;font-weight:400;color:#505258;">Alana Gra...</div>
<div class="r" style="left:897.30px;top:886.00px;width:12.20px;height:12.20px;background:#f5841f;border-radius:50%"></div>
<svg class="r" style="left:901.80px;top:889.30px;" width="4" height="6" viewBox="0 0 4 6"><path d="M1 5.5 V1.5 H3 M0.5 3.2 H2.5" stroke="#7a3a05" stroke-width="0.9" fill="none"/></svg>
<div class="t" style="left:913.60px;top:887px;font-size:10.3px;line-height:10.3px;font-weight:400;color:#505258;">field-demo-bot</div>
<div class="t" style="left:1016.50px;top:887px;font-size:9.8px;line-height:9.8px;font-weight:400;color:#505258;">View issue hi...</div>
<div class="t" style="left:203.00px;top:909px;width:38px;text-align:center;font-size:9.6px;line-height:9.6px;font-weight:700;color:#1f2a3c;letter-spacing:-0.3px;-webkit-text-stroke-width:0">28</div>
<svg class="r" style="left:252.00px;top:908.00px;" width="9" height="12" viewBox="0 0 9 12"><path d="M1.2 1 H7.8 V11 L4.5 8 L1.2 11Z" stroke="#6a9a23" stroke-width="1.15" fill="none" stroke-linejoin="round"/></svg>
<div class="t" style="left:358.00px;top:909px;font-size:10.3px;line-height:10.3px;font-weight:400;color:#2a63d9;">PLAT-33486</div>
<div class="t" style="left:448.70px;top:909px;font-size:10px;line-height:10px;font-weight:400;color:#505258;">Setup produc...</div>
<div class="r" style="left:535.00px;top:907.20px;width:33.80px;height:13.30px;background:#dddee1;border:1px solid #b9bec8;border-radius:2.5px"></div>
<div class="t" style="left:538.60px;top:910px;font-size:8.3px;line-height:8.3px;font-weight:700;color:#292a2e;">TO DO</div>
<div class="t" style="left:627.90px;top:910px;font-size:9px;line-height:9px;font-weight:400;color:#505258;">4</div>
<div class="r" style="left:715.30px;top:907.20px;width:73.40px;height:12.40px;border:1px solid #c6c8cc;border-radius:2px"></div>
<div class="t" style="left:718.80px;top:910px;font-size:8.7px;line-height:8.7px;font-weight:700;color:#253452;">14/APR/25 9:...</div>
<div class="r" style="left:808.00px;top:908.00px;width:12.20px;height:12.20px;background:#8a7fe0;border-radius:50%"></div>
<div class="r" style="left:811.30px;top:910.80px;width:5.60px;height:7.60px;background:#e8c2a8;border-radius:45%"></div>
<div class="r" style="left:811.10px;top:910.00px;width:6.00px;height:2.60px;background:#4b4b55;border-radius:3px 3px 1px 1px"></div>
<div class="t" style="left:823.70px;top:909px;font-size:9.7px;line-height:9.7px;font-weight:400;color:#505258;">Mitch Dav...</div>
<div class="r" style="left:897.30px;top:908.00px;width:12.20px;height:12.20px;background:#f5841f;border-radius:50%"></div>
<svg class="r" style="left:901.80px;top:911.30px;" width="4" height="6" viewBox="0 0 4 6"><path d="M1 5.5 V1.5 H3 M0.5 3.2 H2.5" stroke="#7a3a05" stroke-width="0.9" fill="none"/></svg>
<div class="t" style="left:913.60px;top:909px;font-size:10.3px;line-height:10.3px;font-weight:400;color:#505258;">field-demo-bot</div>
<div class="t" style="left:1016.50px;top:909px;font-size:9.8px;line-height:9.8px;font-weight:400;color:#505258;">View issue hi...</div>
<div class="t" style="left:203.00px;top:932px;width:38px;text-align:center;font-size:9.6px;line-height:9.6px;font-weight:700;color:#1f2a3c;letter-spacing:-0.3px;-webkit-text-stroke-width:0">29</div>
<svg class="r" style="left:252.00px;top:931.00px;" width="9" height="12" viewBox="0 0 9 12"><path d="M1.2 1 H7.8 V11 L4.5 8 L1.2 11Z" stroke="#6a9a23" stroke-width="1.15" fill="none" stroke-linejoin="round"/></svg>
<div class="t" style="left:358.00px;top:932px;font-size:10.3px;line-height:10.3px;font-weight:400;color:#2a63d9;">PLAT-33485</div>
<div class="t" style="left:448.70px;top:932px;font-size:10px;line-height:10px;font-weight:400;color:#505258;">Notifications ...</div>
<div class="r" style="left:535.00px;top:930.20px;width:33.80px;height:13.30px;background:#dddee1;border:1px solid #b9bec8;border-radius:2.5px"></div>
<div class="t" style="left:538.60px;top:933px;font-size:8.3px;line-height:8.3px;font-weight:700;color:#292a2e;">TO DO</div>
<div class="t" style="left:627.90px;top:933px;font-size:9px;line-height:9px;font-weight:400;color:#505258;">3</div>
<div class="r" style="left:715.30px;top:930.20px;width:73.40px;height:12.40px;border:1px solid #c6c8cc;border-radius:2px"></div>
<div class="t" style="left:718.80px;top:933px;font-size:8.7px;line-height:8.7px;font-weight:700;color:#253452;">14/APR/25 9:...</div>
<div class="r" style="left:808.00px;top:931.00px;width:12.20px;height:12.20px;background:#1f66e8;border-radius:50%"></div>
<div class="r" style="left:810.60px;top:932.80px;width:7.00px;height:8.50px;background:#172038;border-radius:50%"></div>
<div class="r" style="left:811.80px;top:935.20px;width:4.60px;height:6.00px;background:#f4d0b8;border-radius:45%"></div>
<div class="t" style="left:823.70px;top:932px;font-size:9.7px;line-height:9.7px;font-weight:400;color:#505258;">Alana Gra...</div>
<div class="r" style="left:897.30px;top:931.00px;width:12.20px;height:12.20px;background:#f5841f;border-radius:50%"></div>
<svg class="r" style="left:901.80px;top:934.30px;" width="4" height="6" viewBox="0 0 4 6"><path d="M1 5.5 V1.5 H3 M0.5 3.2 H2.5" stroke="#7a3a05" stroke-width="0.9" fill="none"/></svg>
<div class="t" style="left:913.60px;top:932px;font-size:10.3px;line-height:10.3px;font-weight:400;color:#505258;">field-demo-bot</div>
<div class="t" style="left:1016.50px;top:932px;font-size:9.8px;line-height:9.8px;font-weight:400;color:#505258;">View issue hi...</div>
<div class="t" style="left:203.00px;top:954px;width:38px;text-align:center;font-size:9.6px;line-height:9.6px;font-weight:700;color:#1f2a3c;letter-spacing:-0.3px;-webkit-text-stroke-width:0">30</div>
<svg class="r" style="left:252.00px;top:953.00px;" width="9" height="12" viewBox="0 0 9 12"><path d="M1.2 1 H7.8 V11 L4.5 8 L1.2 11Z" stroke="#6a9a23" stroke-width="1.15" fill="none" stroke-linejoin="round"/></svg>
<div class="t" style="left:358.00px;top:954px;font-size:10.3px;line-height:10.3px;font-weight:400;color:#2a63d9;">PLAT-33484</div>
<div class="t" style="left:448.70px;top:954px;font-size:10px;line-height:10px;font-weight:400;color:#505258;">Salesforce se...</div>
<div class="r" style="left:535.00px;top:952.20px;width:33.80px;height:13.30px;background:#dddee1;border:1px solid #b9bec8;border-radius:2.5px"></div>
<div class="t" style="left:538.60px;top:955px;font-size:8.3px;line-height:8.3px;font-weight:700;color:#292a2e;">TO DO</div>
<div class="t" style="left:627.90px;top:955px;font-size:9px;line-height:9px;font-weight:400;color:#505258;">3</div>
<div class="r" style="left:715.30px;top:952.20px;width:73.40px;height:12.40px;border:1px solid #c6c8cc;border-radius:2px"></div>
<div class="t" style="left:718.80px;top:955px;font-size:8.7px;line-height:8.7px;font-weight:700;color:#253452;">14/APR/25 9:...</div>
<div class="r" style="left:808.00px;top:953.00px;width:12.20px;height:12.20px;background:#1f66e8;border-radius:50%"></div>
<div class="r" style="left:810.60px;top:954.80px;width:7.00px;height:8.50px;background:#172038;border-radius:50%"></div>
<div class="r" style="left:811.80px;top:957.20px;width:4.60px;height:6.00px;background:#f4d0b8;border-radius:45%"></div>
<div class="t" style="left:823.70px;top:954px;font-size:9.7px;line-height:9.7px;font-weight:400;color:#505258;">Alana Gra...</div>
<div class="r" style="left:897.30px;top:953.00px;width:12.20px;height:12.20px;background:#f5841f;border-radius:50%"></div>
<svg class="r" style="left:901.80px;top:956.30px;" width="4" height="6" viewBox="0 0 4 6"><path d="M1 5.5 V1.5 H3 M0.5 3.2 H2.5" stroke="#7a3a05" stroke-width="0.9" fill="none"/></svg>
<div class="t" style="left:913.60px;top:954px;font-size:10.3px;line-height:10.3px;font-weight:400;color:#505258;">field-demo-bot</div>
<div class="t" style="left:1016.50px;top:954px;font-size:9.8px;line-height:9.8px;font-weight:400;color:#505258;">View issue hi...</div>
</div>
<div class="r" style="left:203.00px;top:956.00px;width:1693.50px;height:1.00px;background:#e3e3e3"></div>
<div class="r" style="left:1885.00px;top:267.00px;width:1.00px;height:690.00px;background:#ececec"></div>
<div class="r" style="left:1888.00px;top:270.00px;width:5.50px;height:79.00px;background:#bdbdbd;border-radius:3px"></div>
<div class="r" style="left:15.00px;top:932.00px;width:42.00px;height:42.00px;background:#5b4ff0;border-radius:50%;box-shadow:0 3px 6px rgba(0,0,0,0.10)"></div>
<svg class="r" style="left:27.00px;top:943.00px;" width="18" height="18" viewBox="0 0 18 18"><g stroke="#fff" stroke-width="1.6" stroke-linecap="round"><line x1="13.30" y1="9.00" x2="17.20" y2="9.00"/><line x1="12.72" y1="11.15" x2="16.10" y2="13.10"/><line x1="11.15" y1="12.72" x2="13.10" y2="16.10"/><line x1="9.00" y1="13.30" x2="9.00" y2="17.20"/><line x1="6.85" y1="12.72" x2="4.90" y2="16.10"/><line x1="5.28" y1="11.15" x2="1.90" y2="13.10"/><line x1="4.70" y1="9.00" x2="0.80" y2="9.00"/><line x1="5.28" y1="6.85" x2="1.90" y2="4.90"/><line x1="6.85" y1="5.28" x2="4.90" y2="1.90"/><line x1="9.00" y1="4.70" x2="9.00" y2="0.80"/><line x1="11.15" y1="5.28" x2="13.10" y2="1.90"/><line x1="12.72" y1="6.85" x2="16.10" y2="4.90"/></g><circle cx="9" cy="9" r="2.6" fill="none" stroke="#fff" stroke-width="1.5"/></svg>
<div class="r" style="left:1911.00px;top:512.00px;width:20.00px;height:52.00px;background:#f0f0f0;border-radius:9px;border-left:0"></div>
<div class="r" style="left:1918.50px;top:526.00px;width:1.50px;height:26.00px;background:#d9d9d9"></div>
<svg class="r" style="left:1100.00px;top:444.00px;" width="24" height="30" viewBox="0 0 24 30"><path d="M4.7 4 V21.8 L9 18 L12 25.8 L15.1 24.5 L12.1 17 H17.7Z" fill="rgba(0,0,0,0.15)" transform="translate(0.8,1.3)"/><path d="M4.7 4 V21.8 L9 18 L12 25.8 L15.1 24.5 L12.1 17 H17.7Z" fill="#000" stroke="#fff" stroke-width="1.5" stroke-linejoin="round"/></svg>
</div></body></html>
